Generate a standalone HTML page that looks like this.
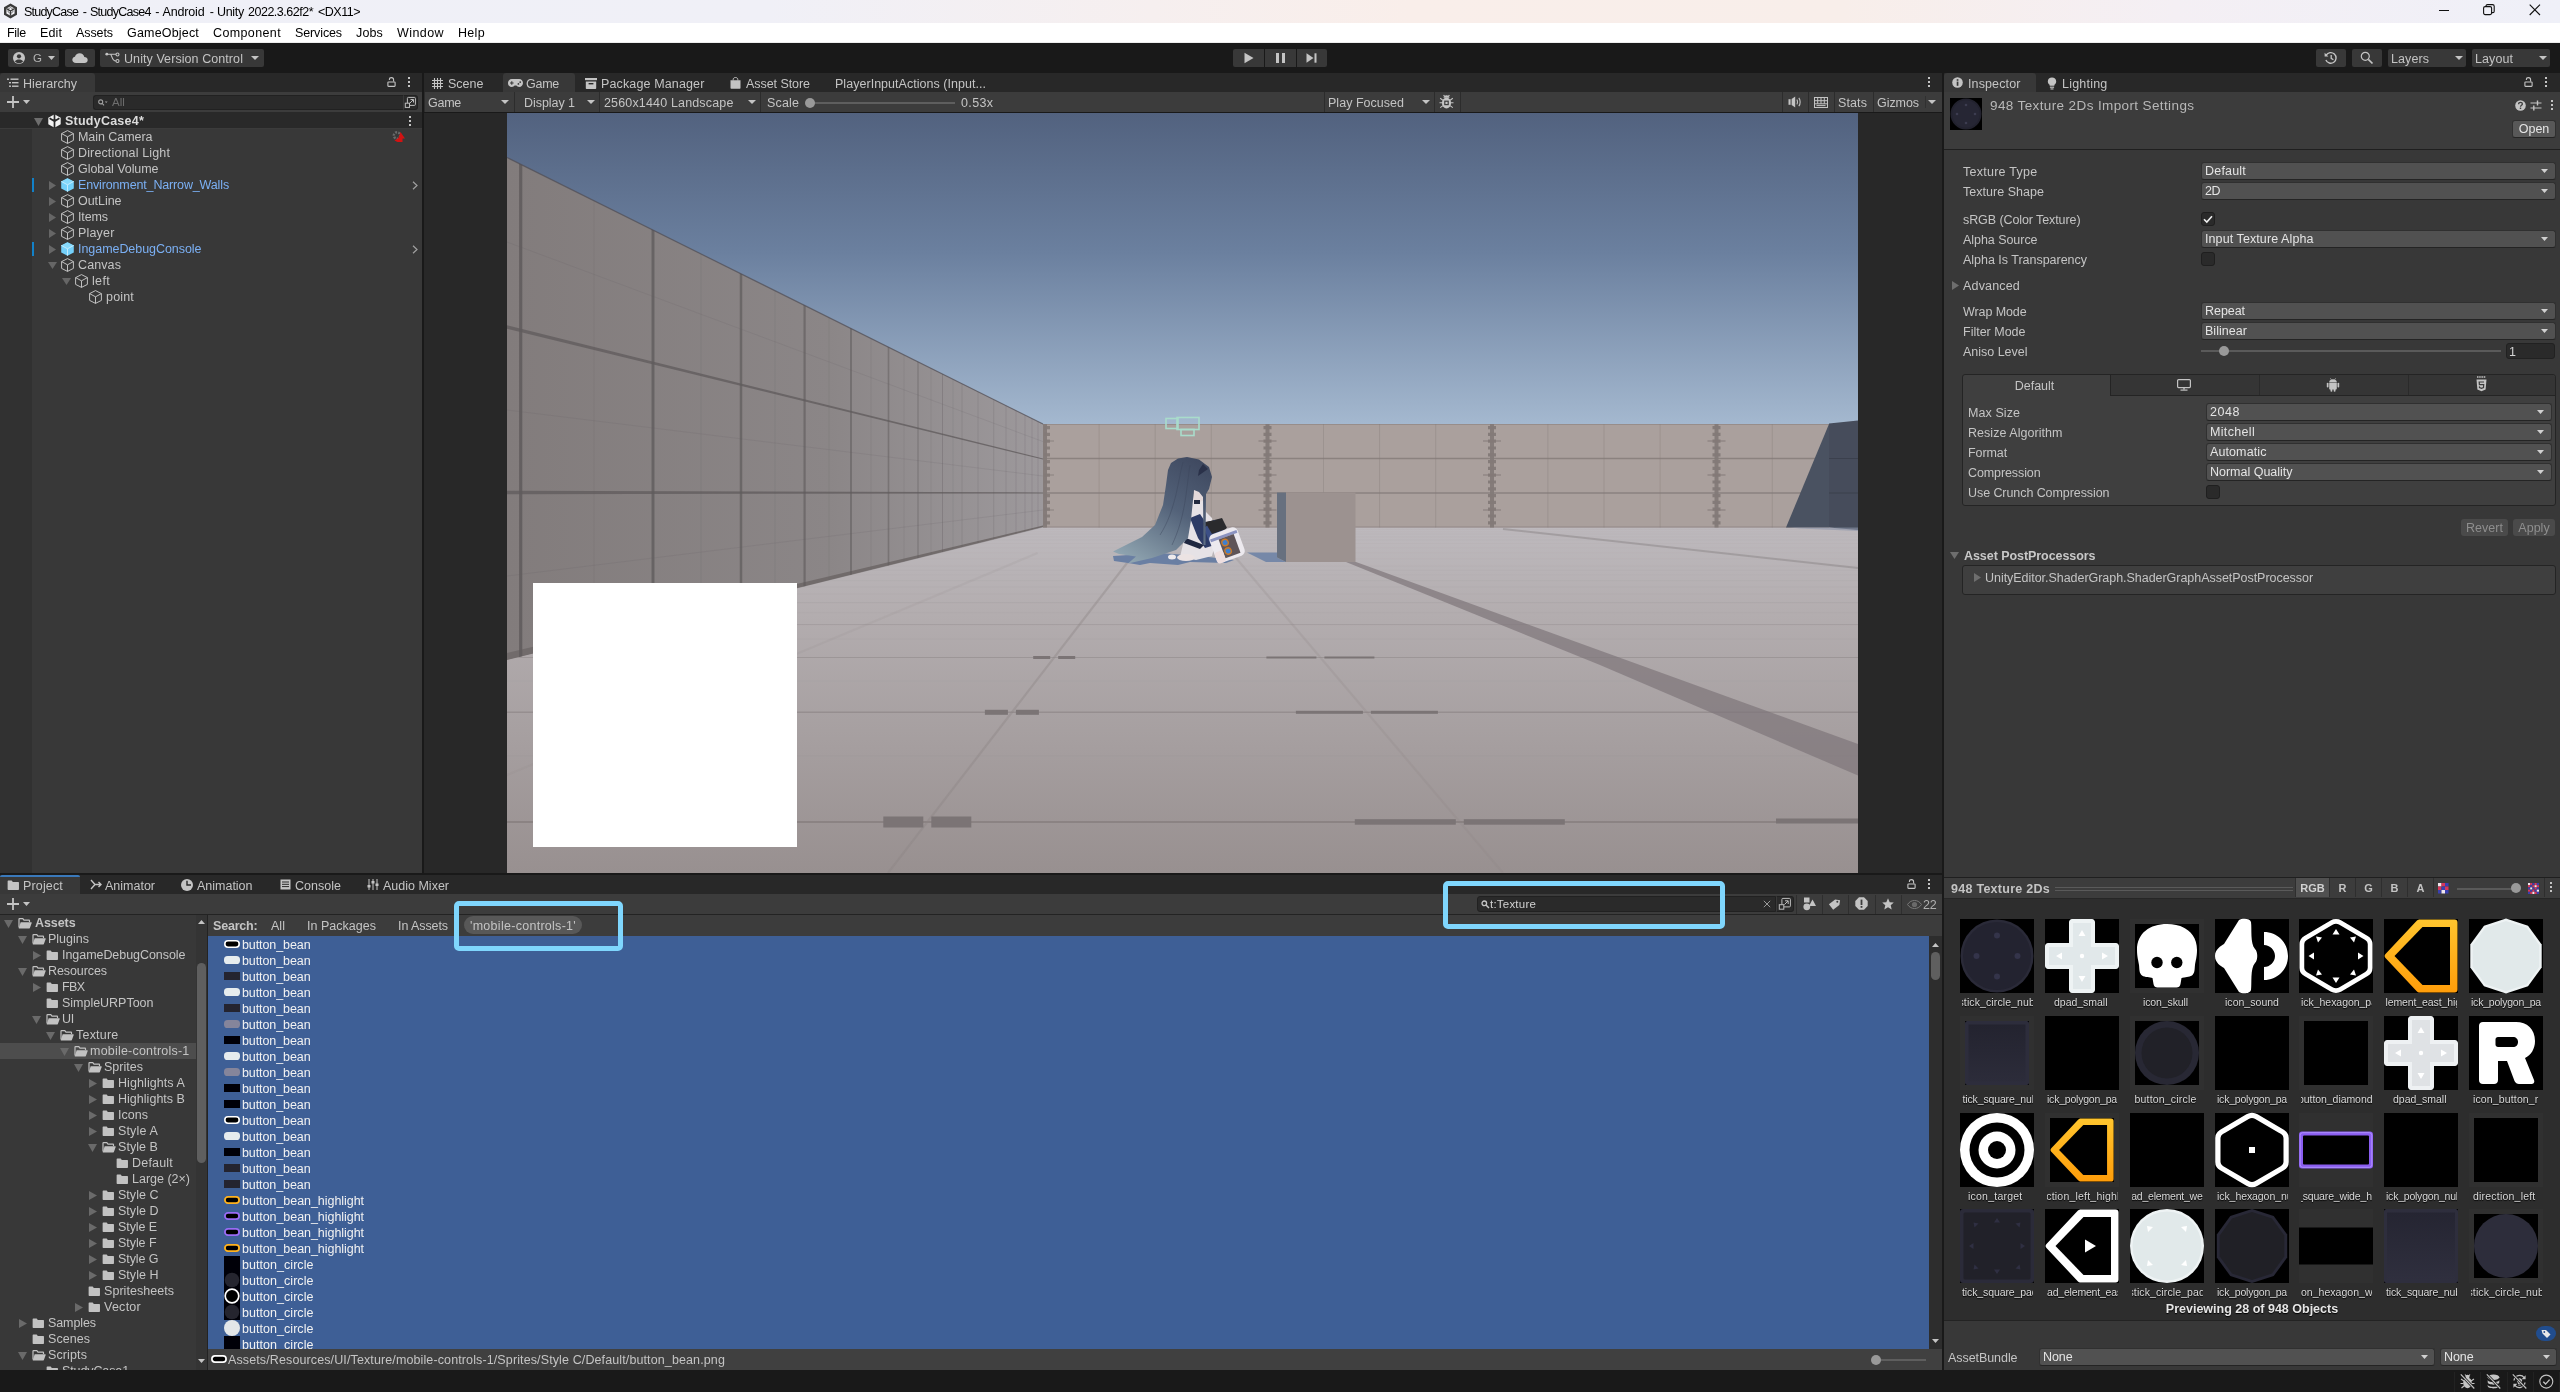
<!DOCTYPE html>
<html><head><meta charset="utf-8"><title>Unity</title><style>*{box-sizing:border-box;margin:0;padding:0}
html,body{width:2560px;height:1392px;overflow:hidden;background:#191919}
body{font-family:"Liberation Sans",sans-serif;font-size:12.5px;color:#c4c4c4;position:relative}
#root{position:absolute;left:0;top:0;width:2560px;height:1392px;will-change:transform}
.a{position:absolute}
.t{position:absolute;white-space:nowrap}
svg{display:block;overflow:visible}
.lab{overflow:hidden;font-size:10.5px;line-height:16px;color:#d8d8d8;white-space:nowrap;text-shadow:0 1px 1px #000}
.lab span{position:absolute;top:0}
</style></head><body>
<div id="root">
<div class="a" style="left:0px;top:0px;width:2560px;height:23px;background:linear-gradient(90deg,#eff0f7 0%,#f0f0f7 30%,#f6efef 45%,#f9eeea 55%,#f8eeea 72%,#f4eff4 85%,#eff0f8 100%);"></div>
<svg class="a" style="left:3px;top:3px;" width="15" height="16" viewBox="0 0 15 16"><path d="M7.5 0.6L14 4.2V11.8L7.5 15.4L1 11.8V4.2Z" fill="#3a3a3a"/><path d="M7.5 3.2L11.6 5.5V10.5L7.5 12.8L3.4 10.5V5.5Z" fill="#f2f2f6"/><path d="M7.5 8V12.8M7.5 8L3.4 5.5M7.5 8L11.6 5.5" stroke="#3a3a3a" stroke-width="1.4" fill="none"/><path d="M7.5 4.6L9.9 6V9L7.5 10.4L5.1 9V6Z" fill="none" stroke="#3a3a3a" stroke-width="0.6"/></svg>
<div class="t" style="left:24px;top:1px;height:23px;line-height:23px;color:#000;letter-spacing:-0.773px;">StudyCase</div>
<div class="t" style="left:82.8px;top:1px;height:23px;line-height:23px;color:#000;letter-spacing:0.244px;">-</div>
<div class="t" style="left:90px;top:1px;height:23px;line-height:23px;color:#000;letter-spacing:-0.731px;">StudyCase4</div>
<div class="t" style="left:155.3px;top:1px;height:23px;line-height:23px;color:#000;letter-spacing:0.244px;">-</div>
<div class="t" style="left:162.5px;top:1px;height:23px;line-height:23px;color:#000;letter-spacing:-0.156px;">Android</div>
<div class="t" style="left:209.8px;top:1px;height:23px;line-height:23px;color:#000;letter-spacing:0.244px;">-</div>
<div class="t" style="left:217px;top:1px;height:23px;line-height:23px;color:#000;letter-spacing:-0.337px;">Unity</div>
<div class="t" style="left:248px;top:1px;height:23px;line-height:23px;color:#000;letter-spacing:-0.491px;">2022.3.62f2*</div>
<div class="t" style="left:318px;top:1px;height:23px;line-height:23px;color:#000;letter-spacing:-0.492px;">&lt;DX11&gt;</div>
<div class="a" style="left:2439px;top:10px;width:10px;height:1px;background:#111;"></div>
<svg class="a" style="left:2483px;top:4px;" width="12" height="12" viewBox="0 0 12 12"><rect x="0.6" y="2.6" width="8" height="8" rx="1.5" fill="none" stroke="#111" stroke-width="1.1"/><path d="M3 2.6V2.1C3 1.2 3.7 0.6 4.5 0.6H9.5C10.5 0.6 11.2 1.3 11.2 2.2V7.2C11.2 8 10.6 8.6 9.8 8.6H8.8" fill="none" stroke="#111" stroke-width="1.1"/></svg>
<svg class="a" style="left:2529px;top:4px;" width="12" height="12" viewBox="0 0 12 12"><path d="M0.7 0.7L11 11M11 0.7L0.7 11" stroke="#111" stroke-width="1.1" fill="none"/></svg>
<div class="a" style="left:0px;top:23px;width:2560px;height:20px;background:#fff;border-bottom:1px solid #ececec;"></div>
<div class="t" style="left:7px;top:24px;height:19px;line-height:19px;color:#000;letter-spacing:-0.289px;">File</div>
<div class="t" style="left:40px;top:24px;height:19px;line-height:19px;color:#000;letter-spacing:0.113px;">Edit</div>
<div class="t" style="left:76px;top:24px;height:19px;line-height:19px;color:#000;letter-spacing:-0.086px;">Assets</div>
<div class="t" style="left:127px;top:24px;height:19px;line-height:19px;color:#000;letter-spacing:0.184px;">GameObject</div>
<div class="t" style="left:213px;top:24px;height:19px;line-height:19px;color:#000;letter-spacing:0.375px;">Component</div>
<div class="t" style="left:295px;top:24px;height:19px;line-height:19px;color:#000;letter-spacing:-0.117px;">Services</div>
<div class="t" style="left:356px;top:24px;height:19px;line-height:19px;color:#000;letter-spacing:0.148px;">Jobs</div>
<div class="t" style="left:397px;top:24px;height:19px;line-height:19px;color:#000;letter-spacing:0.422px;">Window</div>
<div class="t" style="left:458px;top:24px;height:19px;line-height:19px;color:#000;letter-spacing:0.320px;">Help</div>
<div class="a" style="left:0px;top:43px;width:2560px;height:30px;background:#191919;"></div>
<div class="a" style="left:8px;top:49px;width:51px;height:18px;background:#383838;border-radius:2px;"></div>
<svg class="a" style="left:13px;top:52px;" width="12" height="12" viewBox="0 0 12 12"><circle cx="6" cy="6" r="6" fill="#c4c4c4"/><circle cx="6" cy="4.3" r="2.1" fill="#383838"/><path d="M1.9 9.4C2.8 7.9 4.2 7.4 6 7.4S9.2 7.9 10.1 9.4C9 10.6 7.6 11.2 6 11.2S3 10.6 1.9 9.4Z" fill="#383838"/></svg>
<div class="t" style="left:33px;top:49px;height:18px;line-height:18px;font-size:11.5px;color:#b4b4b4;letter-spacing:-0.938px;">G</div>
<svg class="a" style="left:48px;top:56px;" width="7" height="4" viewBox="0 0 7 4"><path d="M0 0H7L3.5 4Z" fill="#c4c4c4"/></svg>
<div class="a" style="left:65px;top:49px;width:30px;height:18px;background:#383838;border-radius:2px;"></div>
<svg class="a" style="left:72px;top:53px;" width="16" height="10" viewBox="0 0 16 10"><path d="M4 10C1.8 10 0.3 8.6 0.3 6.8C0.3 5.2 1.5 4 3 3.8C3.5 1.7 5.3 0.3 7.6 0.3C10 0.3 11.9 1.9 12.3 4C14.2 4 15.7 5.3 15.7 7C15.7 8.7 14.3 10 12.5 10Z" fill="#c4c4c4"/></svg>
<div class="a" style="left:100px;top:49px;width:164px;height:18px;background:#383838;border-radius:2px;"></div>
<svg class="a" style="left:105px;top:52px;" width="15" height="12" viewBox="0 0 15 12"><circle cx="1.8" cy="2.2" r="1.4" fill="#c4c4c4"/><circle cx="12.5" cy="2.5" r="1.5" fill="none" stroke="#c4c4c4" stroke-width="1.1"/><circle cx="12.5" cy="9" r="1.5" fill="none" stroke="#c4c4c4" stroke-width="1.1"/><path d="M3 2.2H11M5.5 2.4C7 2.6 6.5 9 11 9" fill="none" stroke="#c4c4c4" stroke-width="1.1"/></svg>
<div class="t" style="left:124px;top:50px;height:18px;line-height:18px;color:#c4c4c4;letter-spacing:0.075px;">Unity Version Control</div>
<svg class="a" style="left:251px;top:56px;" width="8" height="4" viewBox="0 0 8 4"><path d="M0 0H8L4.0 4Z" fill="#c4c4c4"/></svg>
<div class="a" style="left:1233px;top:49px;width:31px;height:18px;background:#383838;border-radius:2px 0 0 2px;"></div>
<svg class="a" style="left:1244px;top:52px;" width="10" height="12" viewBox="0 0 10 12"><path d="M0.5 0.8L9.5 6L0.5 11.2Z" fill="#c4c4c4"/></svg>
<div class="a" style="left:1265px;top:49px;width:31px;height:18px;background:#383838;"></div>
<div class="a" style="left:1276px;top:53px;width:3px;height:10px;background:#c4c4c4;"></div>
<div class="a" style="left:1282px;top:53px;width:3px;height:10px;background:#c4c4c4;"></div>
<div class="a" style="left:1297px;top:49px;width:30px;height:18px;background:#383838;border-radius:0 2px 2px 0;"></div>
<svg class="a" style="left:1306px;top:53px;" width="12" height="10" viewBox="0 0 12 10"><path d="M0.5 0.3L7.5 5L0.5 9.7Z" fill="#c4c4c4"/><rect x="8.5" y="0.3" width="2" height="9.4" fill="#c4c4c4"/></svg>
<div class="a" style="left:2316px;top:49px;width:30px;height:18px;background:#383838;border-radius:2px;"></div>
<svg class="a" style="left:2324px;top:51px;" width="14" height="14" viewBox="0 0 14 14"><path d="M2.2 4.2A5.3 5.3 0 1 1 1.9 9" fill="none" stroke="#c4c4c4" stroke-width="1.4"/><path d="M0.6 1.8V5.6H4.4Z" fill="#c4c4c4"/><path d="M7.2 4V7.4L9.4 8.8" fill="none" stroke="#c4c4c4" stroke-width="1.3"/></svg>
<div class="a" style="left:2352px;top:49px;width:30px;height:18px;background:#383838;border-radius:2px;"></div>
<svg class="a" style="left:2360px;top:51px;" width="14" height="14" viewBox="0 0 14 14"><circle cx="5.3" cy="5.3" r="4" fill="none" stroke="#c4c4c4" stroke-width="1.2"/><path d="M8.3 8.3L12.5 12.5" stroke="#c4c4c4" stroke-width="1.7"/></svg>
<div class="a" style="left:2388px;top:49px;width:78px;height:18px;background:#383838;border-radius:2px;"></div>
<div class="t" style="left:2391px;top:50px;height:18px;line-height:18px;color:#c4c4c4;letter-spacing:0.081px;">Layers</div>
<svg class="a" style="left:2455px;top:56px;" width="8" height="4" viewBox="0 0 8 4"><path d="M0 0H8L4.0 4Z" fill="#c4c4c4"/></svg>
<div class="a" style="left:2472px;top:49px;width:78px;height:18px;background:#383838;border-radius:2px;"></div>
<div class="t" style="left:2475px;top:50px;height:18px;line-height:18px;color:#c4c4c4;letter-spacing:0.078px;">Layout</div>
<svg class="a" style="left:2539px;top:56px;" width="8" height="4" viewBox="0 0 8 4"><path d="M0 0H8L4.0 4Z" fill="#c4c4c4"/></svg>
<div class="a" style="left:0px;top:73px;width:422px;height:19px;background:#282828;"></div>
<div class="a" style="left:0px;top:73px;width:95px;height:19px;background:#383838;border-radius:3px 3px 0 0;"></div>
<svg class="a" style="left:7px;top:78px;" width="12" height="10" viewBox="0 0 12 10"><rect x="0" y="0.5" width="2" height="1.4" fill="#c4c4c4"/><rect x="3.5" y="0.5" width="8" height="1.4" fill="#c4c4c4"/><rect x="2" y="4" width="2" height="1.4" fill="#c4c4c4"/><rect x="5" y="4" width="6.5" height="1.4" fill="#c4c4c4"/><rect x="2" y="7.5" width="2" height="1.4" fill="#c4c4c4"/><rect x="5" y="7.5" width="6.5" height="1.4" fill="#c4c4c4"/></svg>
<div class="t" style="left:23px;top:74px;height:20px;line-height:20px;color:#c4c4c4;letter-spacing:0.057px;">Hierarchy</div>
<svg class="a" style="left:387px;top:77px;" width="9" height="10" viewBox="0 0 9 10"><path d="M6.600 4.600V2.800C6.600 1.500 5.700 0.600 4.500 0.600S2.400 1.400 2.400 2.500V3" fill="none" stroke="#c4c4c4" stroke-width="1.100"/><rect x="0.900" y="5" width="7.200" height="4.400" rx="0.600" fill="none" stroke="#c4c4c4" stroke-width="1.100"/></svg>
<svg class="a" style="left:408px;top:77px;" width="2" height="10" viewBox="0 0 2 10"><rect x="0" y="0" width="2" height="2" fill="#c4c4c4"/><rect x="0" y="4" width="2" height="2" fill="#c4c4c4"/><rect x="0" y="8" width="2" height="2" fill="#c4c4c4"/></svg>
<div class="a" style="left:0px;top:92px;width:422px;height:20px;background:#3c3c3c;"></div>
<svg class="a" style="left:7px;top:96px;" width="12" height="12" viewBox="0 0 12 12"><path d="M6 0V12M0 6H12" stroke="#c4c4c4" stroke-width="1.8"/></svg>
<svg class="a" style="left:23px;top:100px;" width="7" height="4" viewBox="0 0 7 4"><path d="M0 0H7L3.5 4Z" fill="#c4c4c4"/></svg>
<div class="a" style="left:93px;top:95px;width:310px;height:15px;background:#2a2a2a;border:1px solid #212121;border-radius:3px;border-right:none;border-radius:3px 0 0 3px;"></div>
<div class="a" style="left:403px;top:95px;width:15px;height:15px;background:#2a2a2a;border:1px solid #212121;border-radius:0 3px 3px 0;border-left:1px solid #3a3a3a;"></div>
<svg class="a" style="left:98px;top:99px;" width="10" height="7" viewBox="0 0 10 7"><circle cx="2.7" cy="2.9" r="2" fill="none" stroke="#a0a0a0" stroke-width="1.1"/><path d="M4.2 4.4L6 6.4" stroke="#a0a0a0" stroke-width="1.1"/><path d="M6.8 2.4H9.6L8.2 4Z" fill="#a0a0a0"/></svg>
<div class="t" style="left:112px;top:95px;height:15px;line-height:15px;font-size:11.5px;color:#6e6e6e;letter-spacing:0.068px;">All</div>
<svg class="a" style="left:404px;top:96px;" width="13" height="13" viewBox="0 0 13 13"><rect x="3.4" y="1.4" width="8" height="8" rx="1" fill="none" stroke="#bdbdbd" stroke-width="1"/><rect x="1.3" y="7.2" width="4.2" height="4.2" fill="#2a2a2a" stroke="#bdbdbd" stroke-width="1"/><path d="M6 7L9.3 3.7M6.5 3.5H9.5V6.5" fill="none" stroke="#bdbdbd" stroke-width="1"/></svg>
<div class="a" style="left:0px;top:112px;width:422px;height:761px;background:#383838;"></div>
<div class="a" style="left:0px;top:128px;width:32px;height:745px;background:#313131;"></div>
<div class="a" style="left:0px;top:112px;width:422px;height:16px;background:#292929;"></div>
<div class="a" style="left:0px;top:128px;width:422px;height:1px;background:#3b3b3b;"></div>
<svg class="a" style="left:34px;top:118px;" width="9" height="8" viewBox="0 0 9 8"><path d="M0 0H9L4.5 8Z" fill="#6e6e6e"/></svg>
<svg class="a" style="left:48px;top:114px;" width="13" height="14" viewBox="0 0 13 14"><path d="M6.500 0.300L12.700 3.700V10.300L6.500 13.700L0.300 10.300V3.700Z" fill="#f2f2f2"/><path d="M6.500 0V14M6.500 7.200L1.600 4.300M6.500 7.200L11.400 4.300" stroke="#292929" stroke-width="1.700" fill="none"/><path d="M4.600 5.400L6.500 8.400L8.400 5.400Z" fill="#292929"/><path d="M2.600 6.200V9.400L5 10.800M10.400 6.200V9.400L8 10.800M4.300 2.400L6.500 1.200" stroke="#292929" stroke-width="0" fill="none"/></svg>
<div class="t" style="left:65px;top:113px;height:17px;line-height:17px;color:#dcdcdc;font-weight:bold;letter-spacing:0.233px;">StudyCase4*</div>
<svg class="a" style="left:409px;top:116px;" width="2" height="10" viewBox="0 0 2 10"><rect x="0" y="0" width="2" height="2" fill="#c4c4c4"/><rect x="0" y="4" width="2" height="2" fill="#c4c4c4"/><rect x="0" y="8" width="2" height="2" fill="#c4c4c4"/></svg>
<svg class="a" style="left:61px;top:130px;" width="13" height="14" viewBox="0 0 13 14"><path d="M6.500 0.600L12.400 3.600V10.400L6.500 13.400L0.600 10.400V3.600Z M0.600 3.600L6.500 6.800L12.400 3.600 M6.500 6.800V13.400" fill="none" stroke="#c8c8c8" stroke-width="0.950" stroke-linejoin="round"/></svg>
<div class="t" style="left:78px;top:129px;height:17px;line-height:17px;color:#c4c4c4;letter-spacing:-0.047px;">Main Camera</div>
<svg class="a" style="left:61px;top:146px;" width="13" height="14" viewBox="0 0 13 14"><path d="M6.500 0.600L12.400 3.600V10.400L6.500 13.400L0.600 10.400V3.600Z M0.600 3.600L6.500 6.800L12.400 3.600 M6.500 6.800V13.400" fill="none" stroke="#c8c8c8" stroke-width="0.950" stroke-linejoin="round"/></svg>
<div class="t" style="left:78px;top:145px;height:17px;line-height:17px;color:#c4c4c4;letter-spacing:0.139px;">Directional Light</div>
<svg class="a" style="left:61px;top:162px;" width="13" height="14" viewBox="0 0 13 14"><path d="M6.500 0.600L12.400 3.600V10.400L6.500 13.400L0.600 10.400V3.600Z M0.600 3.600L6.500 6.800L12.400 3.600 M6.500 6.800V13.400" fill="none" stroke="#c8c8c8" stroke-width="0.950" stroke-linejoin="round"/></svg>
<div class="t" style="left:78px;top:161px;height:17px;line-height:17px;color:#c4c4c4;letter-spacing:-0.062px;">Global Volume</div>
<svg class="a" style="left:49px;top:181px;" width="7" height="9" viewBox="0 0 7 9"><path d="M0 0L7 4.5L0 9Z" fill="#666"/></svg>
<svg class="a" style="left:61px;top:178px;" width="13" height="14" viewBox="0 0 13 14"><path d="M6.500 0.200L12.800 3.400V10.600L6.500 13.800L0.200 10.600V3.400Z" fill="#74d0fa"/><path d="M6.500 0.200L12.800 3.400L6.500 6.800L0.200 3.400Z" fill="#86d9fc"/><path d="M0.200 3.400L6.500 6.800L12.800 3.400M6.500 6.800V13.800" fill="none" stroke="#d4f1ff" stroke-width="0.800"/></svg>
<div class="a" style="left:32px;top:178px;width:2px;height:14px;background:#1281c8;"></div>
<svg class="a" style="left:412px;top:181px;" width="6" height="9" viewBox="0 0 6 9"><path d="M1 0.8L5 4.5L1 8.2" fill="none" stroke="#a0a0a0" stroke-width="1.2"/></svg>
<div class="t" style="left:78px;top:177px;height:17px;line-height:17px;color:#7bb0f4;letter-spacing:-0.144px;">Environment_Narrow_Walls</div>
<svg class="a" style="left:49px;top:197px;" width="7" height="9" viewBox="0 0 7 9"><path d="M0 0L7 4.5L0 9Z" fill="#666"/></svg>
<svg class="a" style="left:61px;top:194px;" width="13" height="14" viewBox="0 0 13 14"><path d="M6.500 0.600L12.400 3.600V10.400L6.500 13.400L0.600 10.400V3.600Z M0.600 3.600L6.500 6.800L12.400 3.600 M6.500 6.800V13.400" fill="none" stroke="#c8c8c8" stroke-width="0.950" stroke-linejoin="round"/></svg>
<div class="t" style="left:78px;top:193px;height:17px;line-height:17px;color:#c4c4c4;letter-spacing:-0.040px;">OutLine</div>
<svg class="a" style="left:49px;top:213px;" width="7" height="9" viewBox="0 0 7 9"><path d="M0 0L7 4.5L0 9Z" fill="#666"/></svg>
<svg class="a" style="left:61px;top:210px;" width="13" height="14" viewBox="0 0 13 14"><path d="M6.500 0.600L12.400 3.600V10.400L6.500 13.400L0.600 10.400V3.600Z M0.600 3.600L6.500 6.800L12.400 3.600 M6.500 6.800V13.400" fill="none" stroke="#c8c8c8" stroke-width="0.950" stroke-linejoin="round"/></svg>
<div class="t" style="left:78px;top:209px;height:17px;line-height:17px;color:#c4c4c4;letter-spacing:-0.109px;">Items</div>
<svg class="a" style="left:49px;top:229px;" width="7" height="9" viewBox="0 0 7 9"><path d="M0 0L7 4.5L0 9Z" fill="#666"/></svg>
<svg class="a" style="left:61px;top:226px;" width="13" height="14" viewBox="0 0 13 14"><path d="M6.500 0.600L12.400 3.600V10.400L6.500 13.400L0.600 10.400V3.600Z M0.600 3.600L6.500 6.800L12.400 3.600 M6.500 6.800V13.400" fill="none" stroke="#c8c8c8" stroke-width="0.950" stroke-linejoin="round"/></svg>
<div class="t" style="left:78px;top:225px;height:17px;line-height:17px;color:#c4c4c4;letter-spacing:0.177px;">Player</div>
<svg class="a" style="left:49px;top:245px;" width="7" height="9" viewBox="0 0 7 9"><path d="M0 0L7 4.5L0 9Z" fill="#666"/></svg>
<svg class="a" style="left:61px;top:242px;" width="13" height="14" viewBox="0 0 13 14"><path d="M6.500 0.200L12.800 3.400V10.600L6.500 13.800L0.200 10.600V3.400Z" fill="#74d0fa"/><path d="M6.500 0.200L12.800 3.400L6.500 6.800L0.200 3.400Z" fill="#86d9fc"/><path d="M0.200 3.400L6.500 6.800L12.800 3.400M6.500 6.800V13.800" fill="none" stroke="#d4f1ff" stroke-width="0.800"/></svg>
<div class="a" style="left:32px;top:242px;width:2px;height:14px;background:#1281c8;"></div>
<svg class="a" style="left:412px;top:245px;" width="6" height="9" viewBox="0 0 6 9"><path d="M1 0.8L5 4.5L1 8.2" fill="none" stroke="#a0a0a0" stroke-width="1.2"/></svg>
<div class="t" style="left:78px;top:241px;height:17px;line-height:17px;color:#7bb0f4;letter-spacing:-0.050px;">IngameDebugConsole</div>
<svg class="a" style="left:48px;top:262px;" width="9" height="7" viewBox="0 0 9 7"><path d="M0 0H9L4.5 7Z" fill="#666"/></svg>
<svg class="a" style="left:61px;top:258px;" width="13" height="14" viewBox="0 0 13 14"><path d="M6.500 0.600L12.400 3.600V10.400L6.500 13.400L0.600 10.400V3.600Z M0.600 3.600L6.500 6.800L12.400 3.600 M6.500 6.800V13.400" fill="none" stroke="#c8c8c8" stroke-width="0.950" stroke-linejoin="round"/></svg>
<div class="t" style="left:78px;top:257px;height:17px;line-height:17px;color:#c4c4c4;letter-spacing:0.102px;">Canvas</div>
<svg class="a" style="left:62px;top:278px;" width="9" height="7" viewBox="0 0 9 7"><path d="M0 0H9L4.5 7Z" fill="#666"/></svg>
<svg class="a" style="left:75px;top:274px;" width="13" height="14" viewBox="0 0 13 14"><path d="M6.500 0.600L12.400 3.600V10.400L6.500 13.400L0.600 10.400V3.600Z M0.600 3.600L6.500 6.800L12.400 3.600 M6.500 6.800V13.400" fill="none" stroke="#c8c8c8" stroke-width="0.950" stroke-linejoin="round"/></svg>
<div class="t" style="left:92px;top:273px;height:17px;line-height:17px;color:#c4c4c4;letter-spacing:0.332px;">left</div>
<svg class="a" style="left:89px;top:290px;" width="13" height="14" viewBox="0 0 13 14"><path d="M6.500 0.600L12.400 3.600V10.400L6.500 13.400L0.600 10.400V3.600Z M0.600 3.600L6.500 6.800L12.400 3.600 M6.500 6.800V13.400" fill="none" stroke="#c8c8c8" stroke-width="0.950" stroke-linejoin="round"/></svg>
<div class="t" style="left:106px;top:289px;height:17px;line-height:17px;color:#c4c4c4;letter-spacing:0.178px;">point</div>
<svg class="a" style="left:391px;top:129px;" width="15" height="15" viewBox="0 0 15 15"><circle cx="6" cy="6.5" r="3.2" fill="none" stroke="#6a6a6a" stroke-width="2.4" stroke-dasharray="2 1.2"/><path d="M9.5 3L14 9.5L11.5 9.5L11.5 13H6.5L3.5 11.5L7.5 9Z" fill="#d21212"/></svg>
<div class="a" style="left:424px;top:73px;width:1518px;height:19px;background:#282828;"></div>
<div class="a" style="left:503px;top:73px;width:72px;height:19px;background:#383838;border-radius:3px 3px 0 0;"></div>
<svg class="a" style="left:432px;top:78px;" width="11" height="11" viewBox="0 0 11 11"><path d="M2.500 0V11M5.500 0V11M8.500 0V11M0 2.500H11M0 5.500H11M0 8.500H11" stroke="#c4c4c4" stroke-width="1.100"/></svg>
<div class="t" style="left:448px;top:74px;height:20px;line-height:20px;color:#c4c4c4;letter-spacing:0.009px;">Scene</div>
<svg class="a" style="left:508px;top:79px;" width="15" height="8" viewBox="0 0 15 8"><path d="M3.8 0H11.2C13.4 0 15 1.7 15 4S13.4 8 11.2 8C10 8 9 7.4 8.4 6.6H6.6C6 7.4 5 8 3.8 8C1.6 8 0 6.3 0 4S1.6 0 3.8 0Z" fill="#c4c4c4"/><path d="M3.8 2.2V5.8M2 4H5.6" stroke="#383838" stroke-width="1.1"/><circle cx="10.4" cy="4.9" r="0.9" fill="#383838"/><circle cx="12.2" cy="3.1" r="0.9" fill="#383838"/></svg>
<div class="t" style="left:526px;top:74px;height:20px;line-height:20px;color:#c4c4c4;letter-spacing:-0.258px;">Game</div>
<svg class="a" style="left:585px;top:78px;" width="12" height="11" viewBox="0 0 12 11"><rect x="0" y="0" width="12" height="2.2" fill="#c4c4c4"/><path d="M0.8 3.4H11.2V10.2C11.2 10.6 10.9 10.9 10.5 10.9H1.5C1.1 10.9 0.8 10.6 0.8 10.2Z" fill="#c4c4c4"/><rect x="3.6" y="5" width="4.8" height="1.4" fill="#282828"/></svg>
<div class="t" style="left:601px;top:74px;height:20px;line-height:20px;color:#c4c4c4;letter-spacing:0.136px;">Package Manager</div>
<svg class="a" style="left:730px;top:77px;" width="11" height="12" viewBox="0 0 11 12"><path d="M3.2 3.5V2.4C3.2 1.2 4.2 0.5 5.5 0.5S7.8 1.2 7.8 2.4V3.5" fill="none" stroke="#c4c4c4" stroke-width="1"/><path d="M0.5 3.2H10.5V11C10.500 11.4 10.2 11.7 9.8 11.7H1.2C0.8 11.7 0.5 11.4 0.5 11Z" fill="#c4c4c4"/></svg>
<div class="t" style="left:746px;top:74px;height:20px;line-height:20px;color:#c4c4c4;letter-spacing:-0.055px;">Asset Store</div>
<div class="t" style="left:835px;top:74px;height:20px;line-height:20px;color:#c4c4c4;letter-spacing:0.033px;">PlayerInputActions (Input...</div>
<svg class="a" style="left:1928px;top:77px;" width="2" height="10" viewBox="0 0 2 10"><rect x="0" y="0" width="2" height="2" fill="#c4c4c4"/><rect x="0" y="4" width="2" height="2" fill="#c4c4c4"/><rect x="0" y="8" width="2" height="2" fill="#c4c4c4"/></svg>
<div class="a" style="left:424px;top:92px;width:1518px;height:20px;background:#3c3c3c;"></div>
<div class="t" style="left:428px;top:93px;height:20px;line-height:20px;color:#c4c4c4;letter-spacing:-0.258px;">Game</div>
<svg class="a" style="left:501px;top:100px;" width="8" height="4" viewBox="0 0 8 4"><path d="M0 0H8L4.0 4Z" fill="#c4c4c4"/></svg>
<div class="a" style="left:1925px;top:96px;width:1px;height:12px;background:#303030;"></div>
<div class="a" style="left:424px;top:92px;width:1px;height:20px;background:#2c2c2c;"></div>
<div class="a" style="left:514px;top:92px;width:1px;height:20px;background:#2c2c2c;"></div>
<div class="a" style="left:599px;top:92px;width:1px;height:20px;background:#2c2c2c;"></div>
<div class="a" style="left:760px;top:92px;width:1px;height:20px;background:#2c2c2c;"></div>
<div class="a" style="left:1324px;top:92px;width:1px;height:20px;background:#2c2c2c;"></div>
<div class="a" style="left:1434px;top:92px;width:1px;height:20px;background:#2c2c2c;"></div>
<div class="a" style="left:1460px;top:92px;width:1px;height:20px;background:#2c2c2c;"></div>
<div class="a" style="left:1782px;top:92px;width:1px;height:20px;background:#2c2c2c;"></div>
<div class="a" style="left:1808px;top:92px;width:1px;height:20px;background:#2c2c2c;"></div>
<div class="a" style="left:1834px;top:92px;width:1px;height:20px;background:#2c2c2c;"></div>
<div class="a" style="left:1873px;top:92px;width:1px;height:20px;background:#2c2c2c;"></div>
<div class="t" style="left:524px;top:93px;height:20px;line-height:20px;color:#c4c4c4;letter-spacing:-0.047px;">Display 1</div>
<svg class="a" style="left:587px;top:100px;" width="8" height="4" viewBox="0 0 8 4"><path d="M0 0H8L4.0 4Z" fill="#c4c4c4"/></svg>
<div class="t" style="left:604px;top:93px;height:20px;line-height:20px;color:#c4c4c4;letter-spacing:0.157px;">2560x1440 Landscape</div>
<svg class="a" style="left:748px;top:100px;" width="8" height="4" viewBox="0 0 8 4"><path d="M0 0H8L4.0 4Z" fill="#c4c4c4"/></svg>
<div class="t" style="left:767px;top:93px;height:20px;line-height:20px;color:#c4c4c4;letter-spacing:0.144px;">Scale</div>
<div class="a" style="left:812px;top:102px;width:143px;height:1px;background:#5e5e5e;height:1.5px;"></div>
<div class="a" style="left:805px;top:98px;width:10px;height:10px;background:#999;border-radius:5px;"></div>
<div class="t" style="left:961px;top:93px;height:20px;line-height:20px;color:#c4c4c4;letter-spacing:0.384px;">0.53x</div>
<div class="t" style="left:1328px;top:93px;height:20px;line-height:20px;color:#c4c4c4;letter-spacing:0.021px;">Play Focused</div>
<svg class="a" style="left:1422px;top:100px;" width="8" height="4" viewBox="0 0 8 4"><path d="M0 0H8L4.0 4Z" fill="#c4c4c4"/></svg>
<svg class="a" style="left:1439px;top:94px;" width="15" height="16" viewBox="0 0 15 16"><ellipse cx="7.5" cy="9" rx="4.600" ry="5.400" fill="#c4c4c4"/><path d="M4.5 3.8C4.5 2 6 1.2 7.5 1.2S10.5 2 10.5 3.8Z" fill="#c4c4c4"/><path d="M4.6 1L5.6 2.4M10.4 1L9.4 2.4M0.5 8.8H3.5M11.5 8.8H14.5M1.2 4.2L4 6.4M13.8 4.2L11 6.4M1.2 13.6L4 11.6M13.8 13.6L11 11.6" stroke="#c4c4c4" stroke-width="1.1" fill="none"/><rect x="5.2" y="6.6" width="4.600" height="4.6" fill="#3c3c3c"/><rect x="6.4" y="7.8" width="2.2" height="2.2" fill="#c4c4c4"/></svg>
<svg class="a" style="left:1788px;top:96px;" width="14" height="12" viewBox="0 0 14 12"><path d="M0.5 3.2H2.6V8.8H0.5Z" fill="#c4c4c4"/><path d="M3.6 3L7.2 0.4V11.6L3.6 9Z" fill="#c4c4c4"/><path d="M8.8 3.6C9.7 4.6 9.7 7.4 8.8 8.400M10.8 1.8C12.600 3.800 12.600 8.200 10.800 10.200" fill="none" stroke="#c4c4c4" stroke-width="1.1"/></svg>
<svg class="a" style="left:1814px;top:97px;" width="14" height="11" viewBox="0 0 14 11"><rect x="0.5" y="0.5" width="13" height="10" fill="none" stroke="#c4c4c4" stroke-width="1"/><path d="M0.5 3.7H13.5M0.5 6.800H13.500M3.7 0.5V6.800M7 0.500V6.800M10.300 0.500V6.800" stroke="#c4c4c4" stroke-width="1" fill="none"/><path d="M2.5 8.6H11.5" stroke="#c4c4c4" stroke-width="1"/></svg>
<div class="t" style="left:1838px;top:93px;height:20px;line-height:20px;color:#c4c4c4;letter-spacing:0.103px;">Stats</div>
<div class="t" style="left:1877px;top:93px;height:20px;line-height:20px;color:#c4c4c4;letter-spacing:-0.060px;">Gizmos</div>
<svg class="a" style="left:1928px;top:100px;" width="8" height="4" viewBox="0 0 8 4"><path d="M0 0H8L4.0 4Z" fill="#c4c4c4"/></svg>
<div class="a" style="left:424px;top:113px;width:1518px;height:760px;background:#282828;"></div>
<svg class="a" style="left:507px;top:113px" width="1351" height="760" viewBox="507 113 1351 760"><defs>
<linearGradient id="sky" x1="0" y1="113" x2="0" y2="424" gradientUnits="userSpaceOnUse"><stop offset="0" stop-color="#52627f"/><stop offset="0.45" stop-color="#6b809f"/><stop offset="1" stop-color="#a4b8cf"/></linearGradient>
<linearGradient id="lw" x1="507" y1="0" x2="1043" y2="0" gradientUnits="userSpaceOnUse"><stop offset="0" stop-color="#827c7c"/><stop offset="0.6" stop-color="#8b8687"/><stop offset="1" stop-color="#9d999c"/></linearGradient>
<linearGradient id="fl" x1="0" y1="527" x2="0" y2="873" gradientUnits="userSpaceOnUse"><stop offset="0" stop-color="#bdb9bd"/><stop offset="0.25" stop-color="#b3adaf"/><stop offset="1" stop-color="#989090"/></linearGradient>
<linearGradient id="hair" x1="1195" y1="457" x2="1130" y2="560" gradientUnits="userSpaceOnUse"><stop offset="0" stop-color="#3f4960"/><stop offset="0.45" stop-color="#536279"/><stop offset="1" stop-color="#8fa4b0"/></linearGradient>
<clipPath id="lwc"><path d="M507 157.5L1043 424V527L507 660Z"/></clipPath>
<clipPath id="flc"><path d="M507 660L1043 527.5H1858V873H507Z"/></clipPath>
</defs><rect x="507" y="113" width="1351" height="760" fill="url(#sky)"/><path d="M507 657L1043 527H1858V873H507Z" fill="url(#fl)"/><g clip-path="url(#flc)" fill="none"><path d="M507 822.0H1858" stroke="#6f6768" stroke-opacity="0.39" stroke-width="1.8"/><path d="M507 712.3H1858" stroke="#6f6768" stroke-opacity="0.33" stroke-width="1.5"/><path d="M507 657.5H1858" stroke="#6f6768" stroke-opacity="0.28" stroke-width="1.2"/><path d="M507 624.6H1858" stroke="#6f6768" stroke-opacity="0.22" stroke-width="0.9"/><path d="M507 602.7H1858" stroke="#6f6768" stroke-opacity="0.17" stroke-width="0.6"/><path d="M507 587.0H1858" stroke="#6f6768" stroke-opacity="0.11" stroke-width="0.5"/><path d="M507 575.2H1858" stroke="#6f6768" stroke-opacity="0.06" stroke-width="0.5"/><path d="M507 566.1H1858" stroke="#6f6768" stroke-opacity="0.05" stroke-width="0.5"/><path d="M507 558.8H1858" stroke="#6f6768" stroke-opacity="0.05" stroke-width="0.5"/><path d="M507 552.8H1858" stroke="#6f6768" stroke-opacity="0.05" stroke-width="0.5"/><path d="M507 547.8H1858" stroke="#6f6768" stroke-opacity="0.05" stroke-width="0.5"/><path d="M507 543.6H1858" stroke="#6f6768" stroke-opacity="0.05" stroke-width="0.5"/><path d="M507 540.0H1858" stroke="#6f6768" stroke-opacity="0.05" stroke-width="0.5"/><path d="M507 536.9H1858" stroke="#6f6768" stroke-opacity="0.05" stroke-width="0.5"/><path d="M507 534.1H1858" stroke="#6f6768" stroke-opacity="0.05" stroke-width="0.5"/><path d="M507 531.7H1858" stroke="#6f6768" stroke-opacity="0.05" stroke-width="0.5"/><path d="M507 529.6H1858" stroke="#6f6768" stroke-opacity="0.05" stroke-width="0.5"/><path d="M507 527.6H1858" stroke="#6f6768" stroke-opacity="0.05" stroke-width="0.5"/><path d="M507 525.9H1858" stroke="#6f6768" stroke-opacity="0.05" stroke-width="0.5"/><path d="M507 524.3H1858" stroke="#6f6768" stroke-opacity="0.05" stroke-width="0.5"/><path d="M507 756.2H1858" stroke="#7a7273" stroke-opacity="0.08" stroke-width="0.7"/><path d="M507 681.0H1858" stroke="#7a7273" stroke-opacity="0.08" stroke-width="0.7"/><path d="M507 639.2H1858" stroke="#7a7273" stroke-opacity="0.08" stroke-width="0.7"/><path d="M507 612.6H1858" stroke="#7a7273" stroke-opacity="0.08" stroke-width="0.7"/><path d="M507 594.2H1858" stroke="#7a7273" stroke-opacity="0.08" stroke-width="0.7"/><path d="M507 580.7H1858" stroke="#7a7273" stroke-opacity="0.08" stroke-width="0.7"/><path d="M507 570.4H1858" stroke="#7a7273" stroke-opacity="0.08" stroke-width="0.7"/><path d="M1134.7 553L888 873" stroke="#8b8485" stroke-opacity="0.4" stroke-width="2.2"/><path d="M1231.8 553L1503 873" stroke="#8b8485" stroke-opacity="0.22" stroke-width="2.2"/><path d="M1037.6 553L273 873" stroke="#8b8485" stroke-opacity="0.12" stroke-width="2.2"/><path d="M1328.9 553L2118 873" stroke="#8b8485" stroke-opacity="0.0" stroke-width="2.2"/><rect x="883.3" y="816.5" width="40" height="11" fill="#7b7475"/><rect x="931.3" y="816.5" width="40" height="11" fill="#7b7475"/><rect x="1354.8" y="819.2" width="101" height="5.5" fill="#7b7475"/><rect x="1463.8" y="819.2" width="101" height="5.5" fill="#7b7475"/><rect x="984.9" y="709.8" width="23" height="5" fill="#7b7475"/><rect x="1015.9" y="709.8" width="23" height="5" fill="#7b7475"/><rect x="1295.9" y="710.8" width="67" height="3" fill="#7b7475"/><rect x="1370.9" y="710.8" width="67" height="3" fill="#7b7475"/><rect x="1033.2" y="656.0" width="17" height="3" fill="#7b7475"/><rect x="1058.2" y="656.0" width="17" height="3" fill="#7b7475"/><rect x="1266.4" y="656.5" width="50" height="2" fill="#7b7475"/><rect x="1324.4" y="656.5" width="50" height="2" fill="#7b7475"/><rect x="1776" y="818.5" width="82" height="5" fill="#7b7475"/></g><path d="M1503 529L1858 568" stroke="#8e888b" stroke-opacity="0.55" stroke-width="2" fill="none"/><path d="M507 157.5L1043 424V527.5L507 660Z" fill="url(#lw)"/><g clip-path="url(#lwc)" fill="none" stroke="#5f5b5c"><path d="M507 653L1043 525.5V527.5L507 660Z" fill="#716b6b" stroke="none"/><path d="M507 325.3L1043 458.5V459.5L507 328.7Z" fill="#625d5e" fill-opacity="0.8" stroke="none"/><path d="M507 490.8L1043 492.4V493.4L507 494.2Z" fill="#625d5e" fill-opacity="0.8" stroke="none"/><path d="M507 242L1043 441.6" stroke-width="0.7" stroke-opacity="0.2"/><path d="M507 410L1043 476.0" stroke-width="0.7" stroke-opacity="0.2"/><path d="M507 576L1043 510.0" stroke-width="0.7" stroke-opacity="0.2"/><path d="M520.7 100V700" stroke-width="3.2" stroke-opacity="0.85"/><path d="M653 100V700" stroke-width="2.9" stroke-opacity="0.78"/><path d="M741 100V700" stroke-width="2.5" stroke-opacity="0.71"/><path d="M804.6 100V700" stroke-width="2.2" stroke-opacity="0.64"/><path d="M851 100V700" stroke-width="1.9" stroke-opacity="0.57"/><path d="M888.5 100V700" stroke-width="1.6" stroke-opacity="0.50"/><path d="M918 100V700" stroke-width="1.2" stroke-opacity="0.43"/><path d="M942.5 100V700" stroke-width="0.9" stroke-opacity="0.36"/><path d="M962 100V700" stroke-width="0.7" stroke-opacity="0.29"/><path d="M978 100V700" stroke-width="0.7" stroke-opacity="0.28"/><path d="M993.7 100V700" stroke-width="0.7" stroke-opacity="0.28"/><path d="M1006 100V700" stroke-width="0.7" stroke-opacity="0.28"/><path d="M1016 100V700" stroke-width="0.7" stroke-opacity="0.28"/><path d="M1025 100V700" stroke-width="0.7" stroke-opacity="0.28"/><path d="M1032 100V700" stroke-width="0.7" stroke-opacity="0.28"/><path d="M1038 100V700" stroke-width="0.7" stroke-opacity="0.28"/><path d="M594 100V700" stroke-width="0.7" stroke-opacity="0.22"/><path d="M701 100V700" stroke-width="0.7" stroke-opacity="0.22"/><path d="M775 100V700" stroke-width="0.7" stroke-opacity="0.22"/><path d="M829 100V700" stroke-width="0.7" stroke-opacity="0.22"/><path d="M871 100V700" stroke-width="0.7" stroke-opacity="0.22"/><path d="M904 100V700" stroke-width="0.7" stroke-opacity="0.22"/><path d="M931 100V700" stroke-width="0.7" stroke-opacity="0.22"/><path d="M953 100V700" stroke-width="0.7" stroke-opacity="0.22"/></g><path d="M507 157.5L1043 424" stroke="#4e4c52" stroke-width="1.2" stroke-opacity="0.7" fill="none"/><rect x="1043" y="424" width="786" height="103.5" fill="#aaa09d"/><g fill="none" stroke="#837a78"><path d="M1043 458.5H1829" stroke-width="1.4" stroke-opacity="0.8"/><path d="M1043 493H1829" stroke-width="1.4" stroke-opacity="0.8"/><path d="M1043 424.5H1829" stroke-width="1" stroke-opacity="0.5"/><path d="M1043 527H1829" stroke-width="1" stroke-opacity="0.6"/><path d="M1045 424V527.5" stroke-width="4" stroke-opacity="0.95"/><path d="M1047 426V527.5" stroke-width="6" stroke-opacity="0.9" stroke-dasharray="3.2 3.6"/><path d="M1045 441H1054M1045 475H1054M1045 510H1054" stroke-width="1.2" stroke-opacity="0.8"/><path d="M1267.5 424V527.5" stroke-width="4" stroke-opacity="0.95"/><path d="M1267.5 426V527.5" stroke-width="8" stroke-opacity="0.95" stroke-dasharray="3.2 3.6"/><path d="M1258.5 441H1276.5" stroke-width="1.2" stroke-opacity="0.8"/><path d="M1258.5 475H1276.5" stroke-width="1.2" stroke-opacity="0.8"/><path d="M1258.5 510H1276.5" stroke-width="1.2" stroke-opacity="0.8"/><path d="M1492 424V527.5" stroke-width="4" stroke-opacity="0.95"/><path d="M1492 426V527.5" stroke-width="8" stroke-opacity="0.95" stroke-dasharray="3.2 3.6"/><path d="M1483 441H1501" stroke-width="1.2" stroke-opacity="0.8"/><path d="M1483 475H1501" stroke-width="1.2" stroke-opacity="0.8"/><path d="M1483 510H1501" stroke-width="1.2" stroke-opacity="0.8"/><path d="M1716.5 424V527.5" stroke-width="4" stroke-opacity="0.95"/><path d="M1716.5 426V527.5" stroke-width="8" stroke-opacity="0.95" stroke-dasharray="3.2 3.6"/><path d="M1707.5 441H1725.5" stroke-width="1.2" stroke-opacity="0.8"/><path d="M1707.5 475H1725.5" stroke-width="1.2" stroke-opacity="0.8"/><path d="M1707.5 510H1725.5" stroke-width="1.2" stroke-opacity="0.8"/><path d="M1099.1 424V527.5" stroke-width="0.8" stroke-opacity="0.45"/><path d="M1155.2 424V527.5" stroke-width="0.8" stroke-opacity="0.45"/><path d="M1211.3 424V527.5" stroke-width="0.8" stroke-opacity="0.45"/><path d="M1323.5 424V527.5" stroke-width="0.8" stroke-opacity="0.45"/><path d="M1379.6 424V527.5" stroke-width="0.8" stroke-opacity="0.45"/><path d="M1435.7 424V527.5" stroke-width="0.8" stroke-opacity="0.45"/><path d="M1547.9 424V527.5" stroke-width="0.8" stroke-opacity="0.45"/><path d="M1604.0 424V527.5" stroke-width="0.8" stroke-opacity="0.45"/><path d="M1660.1 424V527.5" stroke-width="0.8" stroke-opacity="0.45"/><path d="M1772.3 424V527.5" stroke-width="0.8" stroke-opacity="0.45"/></g><path d="M1829 424L1786 527.5H1829Z" fill="#4a5261"/><path d="M1829 423.5L1858 420.5V530L1829 527.5Z" fill="#464c5b"/><path d="M1829 458.5H1858M1829 493H1858" stroke="#3b404d" stroke-width="1" fill="none"/><path d="M1790 527.5H1858V531L1800 528.5Z" fill="#8b93a8" fill-opacity="0.6"/><path d="M1346 562L1356 562L1858 744V775.5L1600 665Z" fill="#7d7579" fill-opacity="0.7"/><path d="M1247 552.5H1277V557.5L1286 562H1266Z" fill="#7688a8"/><path d="M1277 492.5H1286V562L1277 557.5Z" fill="#67707f"/><rect x="1286" y="492.5" width="69.5" height="69.5" fill="#9c9290"/><g fill="none" stroke="#a9dccb" stroke-width="1.6"><rect x="1166" y="418.5" width="12" height="10"/><rect x="1177" y="417.5" width="22" height="12"/><rect x="1181" y="429.5" width="13" height="6"/></g><path d="M1113 556L1160 553L1200 556L1234 560L1226 563L1190 562L1178 565L1150 563L1140 565L1128 563L1114 561Z" fill="#6a7fa3"/><path d="M1192 498L1203 497L1206 512L1212 518L1216 540L1212 556L1196 560L1180 557L1184 540L1188 520Z" fill="#e6e2e6"/><path d="M1194 490H1204V500L1198 503L1193 499Z" fill="#e4d9da"/><rect x="1194" y="500" width="6" height="4" fill="#232a3f"/><path d="M1190 518L1200 514L1208 526L1215 545L1205 548L1198 538Z" fill="#2d3b66"/><path d="M1186 538L1204 545L1200 549L1184 543Z" fill="#1f2740"/><path d="M1203 523L1222 518L1227 528L1212 536L1206 532Z" fill="#2b2b2f"/><path d="M1204 528L1214 520L1224 524L1222 540L1210 544Z" fill="#3c4f86"/><path d="M1205 522L1222 519L1226 529L1212 534Z" fill="#2a2a2d"/><ellipse cx="1186" cy="557.5" rx="9" ry="3.5" fill="#ece3e3"/><ellipse cx="1172" cy="557" rx="4" ry="2.5" fill="#eeeaec"/><g transform="rotate(-20 1227 545)"><rect x="1212" y="530" width="30" height="30" rx="5" fill="#ece9ee"/><rect x="1213" y="534" width="28" height="3" fill="#8b93c0"/><rect x="1221" y="537" width="16" height="20" fill="#5f5558"/><circle cx="1226" cy="542" r="3.2" fill="#3f7fcc" stroke="#c8792a" stroke-width="1.4"/><circle cx="1226" cy="551" r="3.2" fill="#3f7fcc" stroke="#c8792a" stroke-width="1.4"/><rect x="1212" y="548" width="9" height="12" rx="3" fill="#eedfe0"/></g><path d="M1171 463L1178 458.5L1187 457L1199 459.5L1209 467L1212 477L1209 489L1206 494L1205.5 545L1203.5 545L1203 497L1199 492L1194 490L1193 500L1191 520L1188 538L1176 550L1152 558L1128 563.5L1136 556.5L1119 554L1113 551.5L1126 545L1142 537L1155 525L1163 505L1166 485L1168 470Z" fill="url(#hair)"/><path d="M1203 464L1208 469L1198 476L1199 470Z" fill="#2a3149"/><path d="M1183 462C1178 480 1176 510 1160 535M1190 465C1186 490 1186 515 1172 545" stroke="#3a4459" stroke-width="0.7" stroke-opacity="0.6" fill="none"/><rect x="533" y="583" width="264" height="264" fill="#ffffff"/></svg>
<div class="a" style="left:1944px;top:73px;width:616px;height:1297px;background:#383838;"></div>
<div class="a" style="left:1944px;top:73px;width:616px;height:19px;background:#282828;"></div>
<div class="a" style="left:1944px;top:73px;width:92px;height:19px;background:#383838;border-radius:3px 3px 0 0;"></div>
<svg class="a" style="left:1952px;top:77px;" width="11" height="11" viewBox="0 0 11 11"><circle cx="5.5" cy="5.5" r="5.300" fill="#c4c4c4"/><rect x="4.700" y="4.600" width="1.700" height="4.200" fill="#383838"/><rect x="4.700" y="2.200" width="1.700" height="1.600" fill="#383838"/></svg>
<div class="t" style="left:1968px;top:74px;height:20px;line-height:20px;color:#c4c4c4;letter-spacing:0.122px;">Inspector</div>
<svg class="a" style="left:2047px;top:77px;" width="10" height="13" viewBox="0 0 10 13"><path d="M5 0.500C7.400 0.500 9.200 2.200 9.200 4.400C9.200 6 8.300 7 7.400 7.800V8.800H2.600V7.800C1.700 7 0.800 6 0.800 4.400C0.800 2.200 2.600 0.500 5 0.500Z" fill="#c4c4c4"/><rect x="2.900" y="9.600" width="4.200" height="1.200" fill="#c4c4c4"/><rect x="3.500" y="11.400" width="3" height="1.100" fill="#c4c4c4"/></svg>
<div class="t" style="left:2062px;top:74px;height:20px;line-height:20px;color:#c4c4c4;letter-spacing:0.213px;">Lighting</div>
<svg class="a" style="left:2524px;top:77px;" width="9" height="10" viewBox="0 0 9 10"><path d="M6.600 4.600V2.800C6.600 1.500 5.700 0.600 4.500 0.600S2.400 1.400 2.400 2.500V3" fill="none" stroke="#c4c4c4" stroke-width="1.100"/><rect x="0.900" y="5" width="7.200" height="4.400" rx="0.600" fill="none" stroke="#c4c4c4" stroke-width="1.100"/></svg>
<svg class="a" style="left:2545px;top:77px;" width="2" height="10" viewBox="0 0 2 10"><rect x="0" y="0" width="2" height="2" fill="#c4c4c4"/><rect x="0" y="4" width="2" height="2" fill="#c4c4c4"/><rect x="0" y="8" width="2" height="2" fill="#c4c4c4"/></svg>
<div class="a" style="left:1944px;top:92px;width:616px;height:58px;background:#3c3c3c;border-bottom:1px solid #1f1f1f;"></div>
<div class="a" style="left:1950px;top:98px;width:32px;height:32px;background:#000;"></div>
<svg class="a" style="left:1950px;top:98px;" width="32" height="32" viewBox="0 0 32 32"><circle cx="16" cy="16" r="15.500" fill="#22222e"/><circle cx="16" cy="16" r="13.800" fill="#262634"/><circle cx="16" cy="7" r="1.300" fill="#3c3c50"/><circle cx="16" cy="25" r="1.300" fill="#3c3c50"/><circle cx="7" cy="16" r="1.300" fill="#3c3c50"/><circle cx="25" cy="16" r="1.300" fill="#3c3c50"/></svg>
<div class="t" style="left:1990px;top:97px;height:18px;line-height:18px;font-size:13.5px;color:#b8b8b8;letter-spacing:0.381px;">948 Texture 2Ds Import Settings</div>
<svg class="a" style="left:2515px;top:100px;" width="11" height="11" viewBox="0 0 11 11"><circle cx="5.500" cy="5.500" r="5.300" fill="#c4c4c4"/><path d="M3.600 4.200C3.600 2.900 4.400 2.300 5.500 2.300S7.400 3 7.400 4C7.400 5.300 5.500 5.300 5.500 6.700" fill="none" stroke="#3c3c3c" stroke-width="1.300"/><rect x="4.800" y="7.600" width="1.400" height="1.400" fill="#3c3c3c"/></svg>
<svg class="a" style="left:2530px;top:100px;" width="12" height="11" viewBox="0 0 12 11"><path d="M0.500 3H11.500M0.500 8H11.500" stroke="#c4c4c4" stroke-width="1.200"/><path d="M7.500 0.500V5.500M3.800 5.500V10.500" stroke="#c4c4c4" stroke-width="1.400"/></svg>
<svg class="a" style="left:2551px;top:100px;" width="2" height="10" viewBox="0 0 2 10"><rect x="0" y="0" width="2" height="2" fill="#c4c4c4"/><rect x="0" y="4" width="2" height="2" fill="#c4c4c4"/><rect x="0" y="8" width="2" height="2" fill="#c4c4c4"/></svg>
<div class="a" style="left:2512px;top:120px;width:44px;height:18px;background:#585858;border:1px solid #303030;border-bottom-color:#242424;border-radius:3px;"></div>
<div class="t" style="left:2513px;top:121px;height:16px;line-height:16px;color:#e4e4e4;width:42px;text-align:center;">Open</div>
<div class="t" style="left:1963px;top:163px;height:19px;line-height:19px;color:#c4c4c4;letter-spacing:0.263px;">Texture Type</div>
<div class="a" style="left:2201px;top:162px;width:355px;height:18px;background:#515151;border:1px solid #303030;border-bottom-color:#242424;border-radius:3px;"></div><div class="t" style="left:2205px;top:163px;height:16px;line-height:16px;color:#e4e4e4;letter-spacing:0.199px;">Default</div><svg class="a" style="left:2541px;top:169px;" width="7" height="4" viewBox="0 0 7 4"><path d="M0 0H7L3.5 4Z" fill="#d0d0d0"/></svg>
<div class="t" style="left:1963px;top:183px;height:19px;line-height:19px;color:#c4c4c4;letter-spacing:0.030px;">Texture Shape</div>
<div class="a" style="left:2201px;top:182px;width:355px;height:18px;background:#515151;border:1px solid #303030;border-bottom-color:#242424;border-radius:3px;"></div><div class="t" style="left:2205px;top:183px;height:16px;line-height:16px;color:#e4e4e4;letter-spacing:-0.492px;">2D</div><svg class="a" style="left:2541px;top:189px;" width="7" height="4" viewBox="0 0 7 4"><path d="M0 0H7L3.5 4Z" fill="#d0d0d0"/></svg>
<div class="t" style="left:1963px;top:211px;height:19px;line-height:19px;color:#c4c4c4;letter-spacing:-0.087px;">sRGB (Color Texture)</div>
<div class="a" style="left:2201px;top:212px;width:14px;height:14px;background:#2a2a2a;border:1px solid #1f1f1f;border-radius:3px;"></div><svg class="a" style="left:2203px;top:215px;" width="10" height="8" viewBox="0 0 10 8"><path d="M1 4.2L3.800 7L9 1.2" fill="none" stroke="#f0f0f0" stroke-width="1.6"/></svg>
<div class="t" style="left:1963px;top:231px;height:19px;line-height:19px;color:#c4c4c4;letter-spacing:-0.047px;">Alpha Source</div>
<div class="a" style="left:2201px;top:230px;width:355px;height:18px;background:#515151;border:1px solid #303030;border-bottom-color:#242424;border-radius:3px;"></div><div class="t" style="left:2205px;top:231px;height:16px;line-height:16px;color:#e4e4e4;letter-spacing:0.090px;">Input Texture Alpha</div><svg class="a" style="left:2541px;top:237px;" width="7" height="4" viewBox="0 0 7 4"><path d="M0 0H7L3.5 4Z" fill="#d0d0d0"/></svg>
<div class="t" style="left:1963px;top:251px;height:19px;line-height:19px;color:#c4c4c4;letter-spacing:-0.018px;">Alpha Is Transparency</div>
<div class="a" style="left:2201px;top:252px;width:14px;height:14px;background:#2a2a2a;border:1px solid #1f1f1f;border-radius:3px;"></div>
<svg class="a" style="left:1952px;top:281px;" width="7" height="9" viewBox="0 0 7 9"><path d="M0 0L7 4.5L0 9Z" fill="#6e6e6e"/></svg>
<div class="t" style="left:1963px;top:277px;height:19px;line-height:19px;color:#c4c4c4;letter-spacing:0.174px;">Advanced</div>
<div class="t" style="left:1963px;top:303px;height:19px;line-height:19px;color:#c4c4c4;letter-spacing:-0.097px;">Wrap Mode</div>
<div class="a" style="left:2201px;top:302px;width:355px;height:18px;background:#515151;border:1px solid #303030;border-bottom-color:#242424;border-radius:3px;"></div><div class="t" style="left:2205px;top:303px;height:16px;line-height:16px;color:#e4e4e4;letter-spacing:-0.052px;">Repeat</div><svg class="a" style="left:2541px;top:309px;" width="7" height="4" viewBox="0 0 7 4"><path d="M0 0H7L3.5 4Z" fill="#d0d0d0"/></svg>
<div class="t" style="left:1963px;top:323px;height:19px;line-height:19px;color:#c4c4c4;letter-spacing:-0.001px;">Filter Mode</div>
<div class="a" style="left:2201px;top:322px;width:355px;height:18px;background:#515151;border:1px solid #303030;border-bottom-color:#242424;border-radius:3px;"></div><div class="t" style="left:2205px;top:323px;height:16px;line-height:16px;color:#e4e4e4;letter-spacing:0.037px;">Bilinear</div><svg class="a" style="left:2541px;top:329px;" width="7" height="4" viewBox="0 0 7 4"><path d="M0 0H7L3.5 4Z" fill="#d0d0d0"/></svg>
<div class="t" style="left:1963px;top:343px;height:19px;line-height:19px;color:#c4c4c4;letter-spacing:-0.013px;">Aniso Level</div>
<div class="a" style="left:2201px;top:350px;width:300px;height:2px;background:#5a5a5a;height:1.500px;"></div>
<div class="a" style="left:2219px;top:346px;width:10px;height:10px;background:#999;border-radius:5px;"></div>
<div class="a" style="left:2506px;top:343px;width:49px;height:16px;background:#2a2a2a;border:1px solid #212121;border-radius:3px;"></div>
<div class="t" style="left:2509px;top:344px;height:17px;line-height:17px;color:#d2d2d2;">1</div>
<div class="a" style="left:1962px;top:374px;width:594px;height:132px;background:#3f3f3f;border:1px solid #242424;border-radius:3px;"></div>
<div class="a" style="left:2110px;top:375px;width:445px;height:21px;background:#353535;border-bottom:1px solid #242424;border-radius:0 3px 0 0;"></div>
<div class="a" style="left:2110px;top:375px;width:1px;height:21px;background:#242424;"></div>
<div class="a" style="left:2259px;top:375px;width:1px;height:20px;background:#2a2a2a;"></div>
<div class="a" style="left:2408px;top:375px;width:1px;height:20px;background:#2a2a2a;"></div>
<div class="t" style="left:1961px;top:376px;height:20px;line-height:20px;color:#c4c4c4;width:147px;text-align:center;">Default</div>
<svg class="a" style="left:2177px;top:379px;" width="14" height="12" viewBox="0 0 14 12"><rect x="0.600" y="0.600" width="12.800" height="8" rx="1" fill="none" stroke="#c4c4c4" stroke-width="1.200"/><rect x="6.300" y="8.600" width="1.400" height="2" fill="#c4c4c4"/><rect x="3.500" y="10.500" width="7" height="1.200" fill="#c4c4c4"/></svg>
<svg class="a" style="left:2326px;top:378px;" width="14" height="14" viewBox="0 0 14 14"><path d="M3.200 4.600H10.800V10.800C10.800 11.200 10.500 11.500 10.100 11.500H3.900C3.500 11.500 3.200 11.200 3.200 10.800Z" fill="#c4c4c4"/><path d="M3.200 3.900C3.400 2.200 5 1.200 7 1.200S10.600 2.200 10.800 3.900Z" fill="#c4c4c4"/><rect x="0.800" y="4.700" width="1.700" height="4.800" rx="0.800" fill="#c4c4c4"/><rect x="11.500" y="4.700" width="1.700" height="4.800" rx="0.800" fill="#c4c4c4"/><rect x="4.500" y="10.500" width="1.800" height="3.200" rx="0.800" fill="#c4c4c4"/><rect x="7.700" y="10.500" width="1.800" height="3.200" rx="0.800" fill="#c4c4c4"/><path d="M4.400 0.300L5.400 1.800M9.600 0.300L8.600 1.800" stroke="#c4c4c4" stroke-width="0.700"/></svg>
<svg class="a" style="left:2476px;top:377px;" width="11" height="15" viewBox="0 0 11 15"><path d="M1 0H10" stroke="#c4c4c4" stroke-width="1.400" stroke-dasharray="1.500 0.700"/><path d="M0.500 2.500H10.500L9.600 12.500L5.500 14.200L1.400 12.500Z" fill="#c4c4c4"/><path d="M8 5H3.200L3.400 7.600H7.700L7.500 10.600L5.500 11.400L3.500 10.600L3.400 9.400" fill="none" stroke="#3a3a3a" stroke-width="1.200"/></svg>
<div class="t" style="left:1968px;top:404px;height:19px;line-height:19px;color:#c4c4c4;letter-spacing:0.074px;">Max Size</div>
<div class="a" style="left:2206px;top:403px;width:346px;height:18px;background:#515151;border:1px solid #303030;border-bottom-color:#242424;border-radius:3px;"></div><div class="t" style="left:2210px;top:404px;height:16px;line-height:16px;color:#e4e4e4;letter-spacing:0.547px;">2048</div><svg class="a" style="left:2537px;top:410px;" width="7" height="4" viewBox="0 0 7 4"><path d="M0 0H7L3.5 4Z" fill="#d0d0d0"/></svg>
<div class="t" style="left:1968px;top:424px;height:19px;line-height:19px;color:#c4c4c4;letter-spacing:0.044px;">Resize Algorithm</div>
<div class="a" style="left:2206px;top:423px;width:346px;height:18px;background:#515151;border:1px solid #303030;border-bottom-color:#242424;border-radius:3px;"></div><div class="t" style="left:2210px;top:424px;height:16px;line-height:16px;color:#e4e4e4;letter-spacing:0.328px;">Mitchell</div><svg class="a" style="left:2537px;top:430px;" width="7" height="4" viewBox="0 0 7 4"><path d="M0 0H7L3.5 4Z" fill="#d0d0d0"/></svg>
<div class="t" style="left:1968px;top:444px;height:19px;line-height:19px;color:#c4c4c4;letter-spacing:-0.096px;">Format</div>
<div class="a" style="left:2206px;top:443px;width:346px;height:18px;background:#515151;border:1px solid #303030;border-bottom-color:#242424;border-radius:3px;"></div><div class="t" style="left:2210px;top:444px;height:16px;line-height:16px;color:#e4e4e4;letter-spacing:0.102px;">Automatic</div><svg class="a" style="left:2537px;top:450px;" width="7" height="4" viewBox="0 0 7 4"><path d="M0 0H7L3.5 4Z" fill="#d0d0d0"/></svg>
<div class="t" style="left:1968px;top:464px;height:19px;line-height:19px;color:#c4c4c4;letter-spacing:-0.104px;">Compression</div>
<div class="a" style="left:2206px;top:463px;width:346px;height:18px;background:#515151;border:1px solid #303030;border-bottom-color:#242424;border-radius:3px;"></div><div class="t" style="left:2210px;top:464px;height:16px;line-height:16px;color:#e4e4e4;letter-spacing:-0.011px;">Normal Quality</div><svg class="a" style="left:2537px;top:470px;" width="7" height="4" viewBox="0 0 7 4"><path d="M0 0H7L3.5 4Z" fill="#d0d0d0"/></svg>
<div class="t" style="left:1968px;top:484px;height:19px;line-height:19px;color:#c4c4c4;letter-spacing:-0.073px;">Use Crunch Compression</div>
<div class="a" style="left:2206px;top:485px;width:14px;height:14px;background:#2a2a2a;border:1px solid #1f1f1f;border-radius:3px;"></div>
<div class="a" style="left:2461px;top:519px;width:47px;height:17px;background:#4a4a4a;border-radius:3px;"></div>
<div class="t" style="left:2461px;top:520px;height:17px;line-height:17px;color:#8e8e8e;width:47px;text-align:center;">Revert</div>
<div class="a" style="left:2513px;top:519px;width:42px;height:17px;background:#4a4a4a;border-radius:3px;"></div>
<div class="t" style="left:2513px;top:520px;height:17px;line-height:17px;color:#8e8e8e;width:42px;text-align:center;">Apply</div>
<svg class="a" style="left:1950px;top:552px;" width="9" height="7" viewBox="0 0 9 7"><path d="M0 0H9L4.5 7Z" fill="#6e6e6e"/></svg>
<div class="t" style="left:1964px;top:547px;height:19px;line-height:19px;color:#c8c8c8;font-weight:bold;letter-spacing:-0.061px;">Asset PostProcessors</div>
<div class="a" style="left:1962px;top:565px;width:594px;height:30px;background:#3f3f3f;border:1px solid #242424;border-radius:3px;"></div>
<svg class="a" style="left:1974px;top:573px;" width="7" height="9" viewBox="0 0 7 9"><path d="M0 0L7 4.5L0 9Z" fill="#6e6e6e"/></svg>
<div class="t" style="left:1985px;top:569px;height:19px;line-height:19px;color:#c4c4c4;letter-spacing:-0.038px;">UnityEditor.ShaderGraph.ShaderGraphAssetPostProcessor</div>
<div class="a" style="left:1944px;top:877px;width:616px;height:1px;background:#1f1f1f;"></div>
<div class="a" style="left:1944px;top:878px;width:616px;height:21px;background:#3c3c3c;border-bottom:1px solid #262626;"></div>
<div class="t" style="left:1951px;top:880px;height:19px;line-height:19px;color:#c4c4c4;font-weight:bold;letter-spacing:0.269px;">948 Texture 2Ds</div>
<div class="a" style="left:2055px;top:887px;width:238px;height:1px;background:#5a5a5a;"></div>
<div class="a" style="left:2055px;top:890px;width:238px;height:1px;background:#5a5a5a;"></div>
<div class="a" style="left:2296px;top:878px;width:33px;height:19px;background:#505050;"></div>
<div class="a" style="left:2295px;top:878px;width:1px;height:19px;background:#2e2e2e;"></div>
<div class="a" style="left:2329px;top:878px;width:1px;height:19px;background:#2e2e2e;"></div>
<div class="a" style="left:2355px;top:878px;width:1px;height:19px;background:#2e2e2e;"></div>
<div class="a" style="left:2381px;top:878px;width:1px;height:19px;background:#2e2e2e;"></div>
<div class="a" style="left:2407px;top:878px;width:1px;height:19px;background:#2e2e2e;"></div>
<div class="a" style="left:2433px;top:878px;width:1px;height:19px;background:#2e2e2e;"></div>
<div class="a" style="left:2544px;top:878px;width:1px;height:19px;background:#2e2e2e;"></div>
<div class="t" style="left:2296px;top:879px;height:19px;line-height:19px;font-size:11px;color:#d2d2d2;font-weight:bold;width:33px;text-align:center;">RGB</div>
<div class="t" style="left:2330px;top:879px;height:19px;line-height:19px;font-size:11px;color:#c4c4c4;font-weight:bold;width:25px;text-align:center;">R</div>
<div class="t" style="left:2356px;top:879px;height:19px;line-height:19px;font-size:11px;color:#c4c4c4;font-weight:bold;width:25px;text-align:center;">G</div>
<div class="t" style="left:2382px;top:879px;height:19px;line-height:19px;font-size:11px;color:#c4c4c4;font-weight:bold;width:25px;text-align:center;">B</div>
<div class="t" style="left:2408px;top:879px;height:19px;line-height:19px;font-size:11px;color:#c4c4c4;font-weight:bold;width:25px;text-align:center;">A</div>
<svg class="a" style="left:2438px;top:883px;" width="10.5" height="10.5" viewBox="0 0 10.5 10.5"><rect x="0.0" y="0.0" width="3.5" height="3.5" fill="#f0e6ee"/><rect x="0.0" y="3.5" width="3.5" height="3.5" fill="#d9365a"/><rect x="0.0" y="7.0" width="3.5" height="3.5" fill="#3a3fb0"/><rect x="3.5" y="0.0" width="3.5" height="3.5" fill="#d9365a"/><rect x="3.5" y="3.5" width="3.5" height="3.5" fill="#3a3fb0"/><rect x="3.5" y="7.0" width="3.5" height="3.5" fill="#f0e6ee"/><rect x="7.0" y="0.0" width="3.5" height="3.5" fill="#3a3fb0"/><rect x="7.0" y="3.5" width="3.5" height="3.5" fill="#d9365a"/><rect x="7.0" y="7.0" width="3.5" height="3.5" fill="#3a3fb0"/></svg>
<div class="a" style="left:2457px;top:888px;width:60px;height:1px;background:#5a5a5a;height:1.500px;"></div>
<div class="a" style="left:2511px;top:883px;width:10px;height:10px;background:#999;border-radius:5px;"></div>
<svg class="a" style="left:2528px;top:883px;" width="11.0" height="11.0" viewBox="0 0 11.0 11.0"><rect x="0.0" y="0.0" width="2.2" height="2.2" fill="#f0e6ee"/><rect x="0.0" y="2.2" width="2.2" height="2.2" fill="#d9365a"/><rect x="0.0" y="4.4" width="2.2" height="2.2" fill="#3a3fb0"/><rect x="0.0" y="6.6000000000000005" width="2.2" height="2.2" fill="#d9365a"/><rect x="0.0" y="8.8" width="2.2" height="2.2" fill="#3a3fb0"/><rect x="2.2" y="0.0" width="2.2" height="2.2" fill="#d9365a"/><rect x="2.2" y="2.2" width="2.2" height="2.2" fill="#3a3fb0"/><rect x="2.2" y="4.4" width="2.2" height="2.2" fill="#f0e6ee"/><rect x="2.2" y="6.6000000000000005" width="2.2" height="2.2" fill="#3a3fb0"/><rect x="2.2" y="8.8" width="2.2" height="2.2" fill="#d9365a"/><rect x="4.4" y="0.0" width="2.2" height="2.2" fill="#3a3fb0"/><rect x="4.4" y="2.2" width="2.2" height="2.2" fill="#d9365a"/><rect x="4.4" y="4.4" width="2.2" height="2.2" fill="#3a3fb0"/><rect x="4.4" y="6.6000000000000005" width="2.2" height="2.2" fill="#d9365a"/><rect x="4.4" y="8.8" width="2.2" height="2.2" fill="#f0e6ee"/><rect x="6.6000000000000005" y="0.0" width="2.2" height="2.2" fill="#d9365a"/><rect x="6.6000000000000005" y="2.2" width="2.2" height="2.2" fill="#f0e6ee"/><rect x="6.6000000000000005" y="4.4" width="2.2" height="2.2" fill="#d9365a"/><rect x="6.6000000000000005" y="6.6000000000000005" width="2.2" height="2.2" fill="#3a3fb0"/><rect x="6.6000000000000005" y="8.8" width="2.2" height="2.2" fill="#d9365a"/><rect x="8.8" y="0.0" width="2.2" height="2.2" fill="#3a3fb0"/><rect x="8.8" y="2.2" width="2.2" height="2.2" fill="#d9365a"/><rect x="8.8" y="4.4" width="2.2" height="2.2" fill="#3a3fb0"/><rect x="8.8" y="6.6000000000000005" width="2.2" height="2.2" fill="#f0e6ee"/><rect x="8.8" y="8.8" width="2.2" height="2.2" fill="#3a3fb0"/></svg>
<svg class="a" style="left:2550px;top:882px;" width="2" height="10" viewBox="0 0 2 10"><rect x="0" y="0" width="2" height="2" fill="#c4c4c4"/><rect x="0" y="4" width="2" height="2" fill="#c4c4c4"/><rect x="0" y="8" width="2" height="2" fill="#c4c4c4"/></svg>
<div class="a" style="left:1944px;top:899px;width:616px;height:421px;background:#2d2d2d;"></div>
<svg class="a" style="left:1960px;top:919px" width="74" height="74" viewBox="0 0 74 74"><rect width="74" height="74" fill="#000"/><circle cx="37" cy="37" r="36.500" fill="#2a2a38"/><circle cx="37" cy="37" r="34" fill="#232330"/><circle cx="37" cy="16.500" r="3" fill="#34344a"/><circle cx="37" cy="57.500" r="3" fill="#34344a"/><circle cx="16.500" cy="37" r="3" fill="#34344a"/><circle cx="57.500" cy="37" r="3" fill="#34344a"/></svg>
<div class="a lab" style="left:1961.5px;top:993.5px;width:71px;height:16px;"><span style="left:-3.0px;letter-spacing:0.111px">stick_circle_nub</span></div>
<svg class="a" style="left:2045px;top:919px" width="74" height="74" viewBox="0 0 74 74"><rect width="74" height="74" fill="#000"/><path d="M27 0H47C48.500 0 50 1.500 50 3V24H71C72.500 24 74 25.500 74 27V47C74 48.500 72.500 50 71 50H50V71C50 72.500 48.500 74 47 74H27C25.500 74 24 72.500 24 71V50H3C1.500 50 0 48.500 0 47V27C0 25.500 1.500 24 3 24H24V3C24 1.500 25.500 0 27 0Z" fill="#eef3f4"/><path d="M28 4H46V28H70V46H46V70H28V46H4V28H28Z" fill="#e1e8ea"/><path d="M37 11L40.500 17H33.500ZM37 63L40.500 57H33.500ZM11 37L17 33.500V40.500ZM63 37L57 33.500V40.500Z" fill="#fff"/><circle cx="37" cy="37" r="2.200" fill="#fff"/></svg>
<div class="a lab" style="left:2046.5px;top:993.5px;width:71px;height:16px;"><span style="left:7.5px;letter-spacing:-0.022px">dpad_small</span></div>
<svg class="a" style="left:2130px;top:919px" width="74" height="74" viewBox="0 0 74 74"><rect width="74" height="74" fill="#303030"/><rect x="5" y="5" width="64" height="64" fill="#000"/><path d="M37 5C54 5 67 14 67 31C67 38 65.500 42 65 46C64.500 50 65 54 62 56.500C59 58.500 54 58 51.500 59L50.500 65C50.200 67.500 48.500 68.500 46.500 68.500H27.500C25.500 68.500 23.800 67.500 23.500 65L22.500 59C20 58 15 58.500 12 56.500C9 54 9.500 50 9 46C8.500 42 7 38 7 31C7 14 20 5 37 5Z" fill="#fff"/><circle cx="27" cy="43.500" r="5.700" fill="#000"/><circle cx="46.800" cy="43.500" r="5.700" fill="#000"/></svg>
<div class="a lab" style="left:2131.5px;top:993.5px;width:71px;height:16px;"><span style="left:11.5px;letter-spacing:-0.111px">icon_skull</span></div>
<svg class="a" style="left:2215px;top:919px" width="74" height="74" viewBox="0 0 74 74"><rect width="74" height="74" fill="#000"/><path d="M24 1C27 -1 35 -1 36 3C37 10 35 24 40 30C43 33 43 41 40 44C35 50 37 64 36 71C35 75 27 75 24 73L9 49C6 47 0 44 0 37S6 27 9 25Z" fill="#fff"/><path d="M49 13C62 13 73 23 73 37S62 61 49 61V48C55 48 60 43 60 37S55 26 49 26Z" fill="#fff"/></svg>
<div class="a lab" style="left:2216.5px;top:993.5px;width:71px;height:16px;"><span style="left:8.5px;letter-spacing:0.027px">icon_sound</span></div>
<svg class="a" style="left:2299px;top:919px" width="74" height="74" viewBox="0 0 74 74"><rect width="74" height="74" fill="#000"/><path d="M37 3.500C38.500 3.500 40 4 41 4.600L66 19.500C68.500 21 69.500 23 69.500 25.500V48.500C69.500 51 68.500 53 66 54.500L41 69.400C40 70 38.500 70.500 37 70.500S34 70 33 69.400L8 54.500C5.500 53 4.500 51 4.500 48.500V25.500C4.500 23 5.500 21 8 19.500L33 4.600C34 4 35.500 3.500 37 3.500Z" fill="none" stroke="#fff" stroke-width="4.5" transform="translate(37 37) scale(1.05 1.035) translate(-37 -37)"/><path d="M37 10L40.500 15.500H33.500ZM37 64L40.500 58.500H33.500ZM9.500 37L15 33.500V40.500ZM64.500 37L59 33.500V40.500ZM17 17.500L23 18.500L19 23.500ZM57 17.500L51 18.500L55 23.500ZM17 56.500L23 55.500L19 50.500ZM57 56.500L51 55.500L55 50.500Z" fill="#fff"/></svg>
<div class="a lab" style="left:2300.5px;top:993.5px;width:71px;height:16px;"><span style="left:0.5px;letter-spacing:-0.037px">ick_hexagon_pa</span></div>
<svg class="a" style="left:2384px;top:919px" width="74" height="74" viewBox="0 0 74 74"><rect width="74" height="74" fill="#000"/><defs><linearGradient id="og" x1="0" y1="0" x2="0" y2="1"><stop offset="0" stop-color="#ffc52e"/><stop offset="1" stop-color="#ff9d0a"/></linearGradient></defs><path d="M36 0.500H70.500C72.500 0.500 73.500 1.500 73.500 3.500V70.500C73.500 72.500 72.500 73.500 70.500 73.500H36C34.500 73.500 33.500 73 32.500 72L1.500 39C0.300 37.800 0.300 36.200 1.500 35L32.500 2C33.500 1 34.500 0.500 36 0.500Z" fill="url(#og)"/><path d="M38.500 8H66V66H38.500L10.500 37Z" fill="#000"/></svg>
<div class="a lab" style="left:2385.5px;top:993.5px;width:71px;height:16px;"><span style="left:0.0px;letter-spacing:-0.106px">lement_east_hig</span></div>
<svg class="a" style="left:2469px;top:919px" width="74" height="74" viewBox="0 0 74 74"><rect width="74" height="74" fill="#000"/><polygon points="72.7,48.6 59.0,67.3 37.0,74.5 15.0,67.3 1.3,48.6 1.3,25.4 15.0,6.7 37.0,-0.5 59.0,6.7 72.7,25.4" fill="#eef3f4"/><polygon points="70.3,47.8 57.6,65.3 37.0,72.0 16.4,65.3 3.7,47.8 3.7,26.2 16.4,8.7 37.0,2.0 57.6,8.7 70.3,26.2" fill="#e1e9ea"/></svg>
<div class="a lab" style="left:2470.5px;top:993.5px;width:71px;height:16px;"><span style="left:0.5px;letter-spacing:-0.214px">ick_polygon_pa</span></div>
<svg class="a" style="left:1960px;top:1016px" width="74" height="74" viewBox="0 0 74 74"><rect width="74" height="74" fill="#303030"/><rect x="5" y="5" width="64" height="64" fill="#000"/><defs><linearGradient id="sq" x1="0" y1="0" x2="0" y2="1"><stop offset="0" stop-color="#23232f"/><stop offset="1" stop-color="#2c2c3a"/></linearGradient></defs><rect x="5" y="5" width="64" height="64" rx="2.500" fill="#2d2d3c"/><rect x="8.500" y="8.500" width="57" height="57" fill="url(#sq)"/></svg>
<div class="a lab" style="left:1961.5px;top:1090.5px;width:71px;height:16px;"><span style="left:1.0px;letter-spacing:-0.140px">tick_square_nub</span></div>
<svg class="a" style="left:2045px;top:1016px" width="74" height="74" viewBox="0 0 74 74"><rect width="74" height="74" fill="#000"/></svg>
<div class="a lab" style="left:2046.5px;top:1090.5px;width:71px;height:16px;"><span style="left:0.5px;letter-spacing:-0.214px">ick_polygon_pa</span></div>
<svg class="a" style="left:2130px;top:1016px" width="74" height="74" viewBox="0 0 74 74"><rect width="74" height="74" fill="#303030"/><rect x="5" y="5" width="64" height="64" fill="#000"/><circle cx="37" cy="37" r="32" fill="#282834"/><circle cx="37" cy="37" r="25.500" fill="#212128"/></svg>
<div class="a lab" style="left:2131.5px;top:1090.5px;width:71px;height:16px;"><span style="left:3.0px;letter-spacing:0.188px">button_circle</span></div>
<svg class="a" style="left:2215px;top:1016px" width="74" height="74" viewBox="0 0 74 74"><rect width="74" height="74" fill="#000"/></svg>
<div class="a lab" style="left:2216.5px;top:1090.5px;width:71px;height:16px;"><span style="left:0.5px;letter-spacing:-0.214px">ick_polygon_pa</span></div>
<svg class="a" style="left:2299px;top:1016px" width="74" height="74" viewBox="0 0 74 74"><rect width="74" height="74" fill="#303030"/><rect x="5" y="5" width="64" height="64" fill="#000"/></svg>
<div class="a lab" style="left:2300.5px;top:1090.5px;width:71px;height:16px;"><span style="left:-2.5px;letter-spacing:-0.061px">button_diamond</span></div>
<svg class="a" style="left:2384px;top:1016px" width="74" height="74" viewBox="0 0 74 74"><rect width="74" height="74" fill="#000"/><path d="M27 0H47C48.500 0 50 1.500 50 3V24H71C72.500 24 74 25.500 74 27V47C74 48.500 72.500 50 71 50H50V71C50 72.500 48.500 74 47 74H27C25.500 74 24 72.500 24 71V50H3C1.500 50 0 48.500 0 47V27C0 25.500 1.500 24 3 24H24V3C24 1.500 25.500 0 27 0Z" fill="#eef1f3"/><path d="M28 4H46V28H70V46H46V70H28V46H4V28H28Z" fill="#dfe2e5"/><path d="M37 11L40.500 17H33.500ZM37 63L40.500 57H33.500ZM11 37L17 33.500V40.500ZM63 37L57 33.500V40.500Z" fill="#fff"/><circle cx="37" cy="37" r="2.200" fill="#fff"/></svg>
<div class="a lab" style="left:2385.5px;top:1090.5px;width:71px;height:16px;"><span style="left:7.5px;letter-spacing:-0.022px">dpad_small</span></div>
<svg class="a" style="left:2469px;top:1016px" width="74" height="74" viewBox="0 0 74 74"><rect width="74" height="74" fill="#000"/><path d="M10 10C10 7.500 11.500 6 14 6H47C58 6 66 13 66 25C66 33 62 39 56 42L65 64C66 66.500 64.500 68 62 68H50C48 68 46.500 67 45.500 65L38 45H29V64C29 66.500 27.500 68 25 68H14C11.500 68 10 66.500 10 64Z" fill="#fff"/><path d="M29 21H44C47 21 49 23 49 26C49 29 47 31 44 31H29C27.500 31 26.500 30 26.500 28.500V23.500C26.500 22 27.500 21 29 21Z" fill="#000"/></svg>
<div class="a lab" style="left:2470.5px;top:1090.5px;width:71px;height:16px;"><span style="left:2.5px;letter-spacing:0.141px">icon_button_r</span></div>
<svg class="a" style="left:1960px;top:1113px" width="74" height="74" viewBox="0 0 74 74"><rect width="74" height="74" fill="#000"/><circle cx="37" cy="37" r="37" fill="#fff"/><circle cx="37" cy="37" r="27.500" fill="#000"/><circle cx="37" cy="37" r="18.500" fill="#fff"/><circle cx="37" cy="37" r="9" fill="#000"/></svg>
<div class="a lab" style="left:1961.5px;top:1187.5px;width:71px;height:16px;"><span style="left:6.5px;letter-spacing:0.229px">icon_target</span></div>
<svg class="a" style="left:2045px;top:1113px" width="74" height="74" viewBox="0 0 74 74"><rect width="74" height="74" fill="#303030"/><rect x="5" y="5" width="64" height="64" fill="#000"/><g transform="translate(5 5) scale(0.865)"><path d="M36 0.500H70.500C72.500 0.500 73.500 1.500 73.500 3.500V70.500C73.500 72.500 72.500 73.500 70.500 73.500H36C34.500 73.500 33.500 73 32.500 72L1.500 39C0.300 37.800 0.300 36.200 1.500 35L32.500 2C33.500 1 34.500 0.500 36 0.500Z" fill="url(#og)"/><path d="M38.500 8H66V66H38.500L10.500 37Z" fill="#000"/></g></svg>
<div class="a lab" style="left:2046.5px;top:1187.5px;width:71px;height:16px;"><span style="left:-0.30000000000000004px;letter-spacing:0.211px">ction_left_highli</span></div>
<svg class="a" style="left:2130px;top:1113px" width="74" height="74" viewBox="0 0 74 74"><rect width="74" height="74" fill="#000"/></svg>
<div class="a lab" style="left:2131.5px;top:1187.5px;width:71px;height:16px;"><span style="left:-0.30000000000000004px;letter-spacing:-0.209px">ad_element_wes</span></div>
<svg class="a" style="left:2215px;top:1113px" width="74" height="74" viewBox="0 0 74 74"><rect width="74" height="74" fill="#000"/><path d="M37 3.500C38.500 3.500 40 4 41 4.600L66 19.500C68.500 21 69.500 23 69.500 25.500V48.500C69.500 51 68.500 53 66 54.500L41 69.400C40 70 38.500 70.500 37 70.500S34 70 33 69.400L8 54.500C5.500 53 4.500 51 4.500 48.500V25.500C4.500 23 5.500 21 8 19.500L33 4.600C34 4 35.500 3.500 37 3.500Z" fill="none" stroke="#fff" stroke-width="5" transform="translate(37 37) scale(1.05 1.035) translate(-37 -37)"/><rect x="34" y="34" width="6" height="6" fill="#fff"/></svg>
<div class="a lab" style="left:2216.5px;top:1187.5px;width:71px;height:16px;"><span style="left:0.5px;letter-spacing:-0.073px">ick_hexagon_nu</span></div>
<svg class="a" style="left:2299px;top:1113px" width="74" height="74" viewBox="0 0 74 74"><rect width="74" height="74" fill="#303030"/><rect x="0" y="18.500" width="74" height="37" rx="3" fill="#8a5df0"/><rect x="1.200" y="19.700" width="71.600" height="34.600" rx="2.500" fill="none" stroke="#b79cff" stroke-width="0.800"/><rect x="4" y="22.500" width="66" height="29" rx="1" fill="#000"/></svg>
<div class="a lab" style="left:2300.5px;top:1187.5px;width:71px;height:16px;"><span style="left:-3.5px;letter-spacing:-0.161px">_square_wide_hi</span></div>
<svg class="a" style="left:2384px;top:1113px" width="74" height="74" viewBox="0 0 74 74"><rect width="74" height="74" fill="#000"/></svg>
<div class="a lab" style="left:2385.5px;top:1187.5px;width:71px;height:16px;"><span style="left:0.5px;letter-spacing:-0.223px">ick_polygon_nub</span></div>
<svg class="a" style="left:2469px;top:1113px" width="74" height="74" viewBox="0 0 74 74"><rect width="74" height="74" fill="#303030"/><rect x="5" y="5" width="64" height="64" fill="#000"/></svg>
<div class="a lab" style="left:2470.5px;top:1187.5px;width:71px;height:16px;"><span style="left:2.5px;letter-spacing:0.210px">direction_left</span></div>
<svg class="a" style="left:1960px;top:1209px" width="74" height="74" viewBox="0 0 74 74"><rect width="74" height="74" fill="#000"/><rect x="0" y="0" width="74" height="74" rx="3" fill="#2b2b39"/><rect x="3.500" y="3.500" width="67" height="67" rx="1.500" fill="#212129"/><path d="M37 9L40 13.500H34ZM37 65L40 60.500H34ZM9 37L13.500 34V40ZM65 37L60.500 34V40ZM13.500 13.500L18.500 14.500L14.500 18.500ZM60.500 13.500L55.500 14.500L59.500 18.500ZM13.500 60.500L18.500 59.500L14.500 55.500ZM60.500 60.500L55.500 59.500L59.500 55.500Z" fill="#2f2f42"/></svg>
<div class="a lab" style="left:1961.5px;top:1283.5px;width:71px;height:16px;"><span style="left:0.5px;letter-spacing:-0.106px">tick_square_pad</span></div>
<svg class="a" style="left:2045px;top:1209px" width="74" height="74" viewBox="0 0 74 74"><rect width="74" height="74" fill="#000"/><path d="M36 0.500H70.500C72.500 0.500 73.500 1.500 73.500 3.500V70.500C73.500 72.500 72.500 73.500 70.500 73.500H36C34.500 73.500 33.500 73 32.500 72L1.500 39C0.300 37.800 0.300 36.200 1.500 35L32.500 2C33.500 1 34.500 0.500 36 0.500Z" fill="#fff"/><path d="M38.500 8H66V66H38.500L10.500 37Z" fill="#000"/><path d="M40 30.500L51 37L40 43.500Z" fill="#fff"/></svg>
<div class="a lab" style="left:2046.5px;top:1283.5px;width:71px;height:16px;"><span style="left:0.5px;letter-spacing:-0.192px">ad_element_eas</span></div>
<svg class="a" style="left:2130px;top:1209px" width="74" height="74" viewBox="0 0 74 74"><rect width="74" height="74" fill="#000"/><circle cx="37" cy="37" r="37" fill="#eef3f4"/><circle cx="37" cy="37" r="34.500" fill="#e1e9ea"/><path d="M17 17L23 18L18 23ZM57 17L51 18L56 23ZM17 57L23 56L18 51ZM57 57L51 56L56 51Z" fill="#fff"/></svg>
<div class="a lab" style="left:2131.5px;top:1283.5px;width:71px;height:16px;"><span style="left:-3.0px;letter-spacing:0.111px">stick_circle_pad</span></div>
<svg class="a" style="left:2215px;top:1209px" width="74" height="74" viewBox="0 0 74 74"><rect width="74" height="74" fill="#000"/><polygon points="72.2,48.4 58.7,66.9 37.0,74.0 15.3,66.9 1.8,48.4 1.8,25.6 15.3,7.1 37.0,0.0 58.7,7.1 72.2,25.6" fill="#282836"/><polygon points="69.3,47.5 57.0,64.5 37.0,71.0 17.0,64.5 4.7,47.5 4.7,26.5 17.0,9.5 37.0,3.0 57.0,9.5 69.3,26.5" fill="#202026"/></svg>
<div class="a lab" style="left:2216.5px;top:1283.5px;width:71px;height:16px;"><span style="left:0.5px;letter-spacing:-0.214px">ick_polygon_pa</span></div>
<svg class="a" style="left:2299px;top:1209px" width="74" height="74" viewBox="0 0 74 74"><rect width="74" height="74" fill="#303030"/><rect x="0" y="18.500" width="74" height="37" fill="#000"/></svg>
<div class="a lab" style="left:2300.5px;top:1283.5px;width:71px;height:16px;"><span style="left:-2.5px;letter-spacing:0.035px">ton_hexagon_wi</span></div>
<svg class="a" style="left:2384px;top:1209px" width="74" height="74" viewBox="0 0 74 74"><rect width="74" height="74" fill="#000"/><defs><linearGradient id="sq2" x1="0" y1="0" x2="0" y2="1"><stop offset="0" stop-color="#252532"/><stop offset="1" stop-color="#2f2f3e"/></linearGradient></defs><rect x="0" y="0" width="74" height="74" rx="2.500" fill="#2e2e3d"/><rect x="3" y="3.500" width="68" height="67.500" fill="url(#sq2)"/></svg>
<div class="a lab" style="left:2385.5px;top:1283.5px;width:71px;height:16px;"><span style="left:0.5px;letter-spacing:-0.140px">tick_square_nub</span></div>
<svg class="a" style="left:2469px;top:1209px" width="74" height="74" viewBox="0 0 74 74"><rect width="74" height="74" fill="#303030"/><rect x="5" y="5" width="64" height="64" fill="#000"/><circle cx="37" cy="37" r="32" fill="#2d2d3b"/></svg>
<div class="a lab" style="left:2470.5px;top:1283.5px;width:71px;height:16px;"><span style="left:-3.0px;letter-spacing:0.111px">stick_circle_nub</span></div>
<div class="t" style="left:1944px;top:1300px;height:18px;line-height:18px;color:#e6e6e6;font-weight:bold;width:616px;text-align:center;text-shadow:0 1px 1px #000;">Previewing 28 of 948 Objects</div>
<div class="a" style="left:1944px;top:1320px;width:616px;height:50px;background:#383838;border-top:1px solid #232323;"></div>
<svg class="a" style="left:2536px;top:1326px;" width="20" height="15" viewBox="0 0 20 15"><rect x="0" y="0" width="20" height="15" rx="8.500" ry="7.500" fill="#214d8e"/><path d="M5.500 4H10L14.500 8.500L11 12L6.500 7.500Z" fill="#e8e8e8"/><circle cx="8.300" cy="6" r="0.900" fill="#2a4f8f"/></svg>
<div class="t" style="left:1948px;top:1349px;height:19px;line-height:19px;color:#c4c4c4;letter-spacing:-0.064px;">AssetBundle</div>
<div class="a" style="left:2039px;top:1348px;width:396px;height:18px;background:#515151;border:1px solid #303030;border-bottom-color:#242424;border-radius:3px;"></div>
<div class="t" style="left:2043px;top:1349px;height:16px;line-height:16px;color:#e4e4e4;letter-spacing:-0.098px;">None</div>
<svg class="a" style="left:2421px;top:1355px;" width="7" height="4" viewBox="0 0 7 4"><path d="M0 0H7L3.5 4Z" fill="#d0d0d0"/></svg>
<div class="a" style="left:2440px;top:1348px;width:117px;height:18px;background:#515151;border:1px solid #303030;border-bottom-color:#242424;border-radius:3px;"></div>
<div class="t" style="left:2444px;top:1349px;height:16px;line-height:16px;color:#e4e4e4;letter-spacing:-0.098px;">None</div>
<svg class="a" style="left:2543px;top:1355px;" width="7" height="4" viewBox="0 0 7 4"><path d="M0 0H7L3.5 4Z" fill="#d0d0d0"/></svg>
<div class="a" style="left:0px;top:875px;width:1942px;height:19px;background:#282828;"></div>
<div class="a" style="left:0px;top:875px;width:80px;height:19px;background:#383838;border-top:2px solid #3a79bb;border-radius:2px 2px 0 0;"></div>
<svg class="a" style="left:6.5px;top:879.5px;" width="12.6" height="10.4" viewBox="0 0 13 11"><path d="M0.5 1.2C0.5 0.8 0.8 0.5 1.2 0.5H4.8L6 2H11.8C12.2 2 12.5 2.3 12.5 2.7V9.8C12.5 10.2 12.2 10.5 11.8 10.5H1.2C0.8 10.5 0.5 10.2 0.5 9.8Z" fill="#c4c4c4"/></svg>
<div class="t" style="left:23px;top:876px;height:20px;line-height:20px;color:#c4c4c4;letter-spacing:0.156px;">Project</div>
<svg class="a" style="left:90px;top:879px;" width="12" height="11" viewBox="0 0 12 11"><path d="M1 1L5 5.500L1 10M5 5.500H11M8.500 3L11 5.500L8.500 8" fill="none" stroke="#c4c4c4" stroke-width="1.400"/></svg>
<div class="t" style="left:105px;top:876px;height:20px;line-height:20px;color:#c4c4c4;letter-spacing:-0.002px;">Animator</div>
<svg class="a" style="left:181px;top:879px;" width="12" height="12" viewBox="0 0 12 12"><circle cx="6" cy="6" r="6" fill="#c4c4c4"/><path d="M6 1.800V6H10" fill="none" stroke="#282828" stroke-width="1.400"/></svg>
<div class="t" style="left:197px;top:876px;height:20px;line-height:20px;color:#c4c4c4;letter-spacing:-0.010px;">Animation</div>
<svg class="a" style="left:280px;top:879px;" width="11" height="11" viewBox="0 0 11 11"><rect x="0.500" y="0.500" width="10" height="10" fill="#c4c4c4"/><path d="M2 3H9M2 5.300H9M2 7.600H9" stroke="#282828" stroke-width="1"/></svg>
<div class="t" style="left:295px;top:876px;height:20px;line-height:20px;color:#c4c4c4;letter-spacing:0.018px;">Console</div>
<svg class="a" style="left:367px;top:879px;" width="12" height="11" viewBox="0 0 12 11"><path d="M2 0V11M6 0V11M10 0V11" stroke="#c4c4c4" stroke-width="1"/><rect x="0.500" y="6" width="3" height="2.500" fill="#c4c4c4"/><rect x="4.500" y="2" width="3" height="2.500" fill="#c4c4c4"/><rect x="8.500" y="4.500" width="3" height="2.500" fill="#c4c4c4"/></svg>
<div class="t" style="left:383px;top:876px;height:20px;line-height:20px;color:#c4c4c4;letter-spacing:0.000px;">Audio Mixer</div>
<svg class="a" style="left:1907px;top:879px;" width="9" height="10" viewBox="0 0 9 10"><path d="M6.600 4.600V2.800C6.600 1.500 5.700 0.600 4.500 0.600S2.400 1.400 2.400 2.500V3" fill="none" stroke="#c4c4c4" stroke-width="1.100"/><rect x="0.900" y="5" width="7.200" height="4.400" rx="0.600" fill="none" stroke="#c4c4c4" stroke-width="1.100"/></svg>
<svg class="a" style="left:1928px;top:879px;" width="2" height="10" viewBox="0 0 2 10"><rect x="0" y="0" width="2" height="2" fill="#c4c4c4"/><rect x="0" y="4" width="2" height="2" fill="#c4c4c4"/><rect x="0" y="8" width="2" height="2" fill="#c4c4c4"/></svg>
<div class="a" style="left:0px;top:894px;width:1942px;height:21px;background:#3c3c3c;border-bottom:1px solid #232323;"></div>
<svg class="a" style="left:7px;top:898px;" width="12" height="12" viewBox="0 0 12 12"><path d="M6 0V12M0 6H12" stroke="#c4c4c4" stroke-width="1.800"/></svg>
<svg class="a" style="left:23px;top:902px;" width="7" height="4" viewBox="0 0 7 4"><path d="M0 0H7L3.5 4Z" fill="#c4c4c4"/></svg>
<div class="a" style="left:1477px;top:896px;width:299px;height:16px;background:#2a2a2a;border:1px solid #212121;border-radius:3px 0 0 3px;"></div>
<div class="a" style="left:1776px;top:896px;width:18px;height:16px;background:#2a2a2a;border:1px solid #212121;border-left:1px solid #3a3a3a;border-radius:0 3px 3px 0;"></div>
<svg class="a" style="left:1481px;top:900px;" width="9" height="9" viewBox="0 0 9 9"><circle cx="3.300" cy="3.300" r="2.300" fill="none" stroke="#c4c4c4" stroke-width="1.300"/><path d="M5 5L8 8" stroke="#c4c4c4" stroke-width="1.500"/></svg>
<div class="t" style="left:1490px;top:896px;height:16px;line-height:16px;font-size:11.5px;color:#d2d2d2;letter-spacing:0.215px;">t:Texture</div>
<svg class="a" style="left:1763px;top:900px;" width="8" height="8" viewBox="0 0 8 8"><path d="M0.800 0.800L7.200 7.200M7.200 0.800L0.800 7.200" stroke="#9a9a9a" stroke-width="1"/></svg>
<svg class="a" style="left:1778px;top:897px;" width="14" height="14" viewBox="0 0 14 14"><rect x="3.900" y="1.400" width="8.500" height="8.500" rx="1" fill="none" stroke="#bdbdbd" stroke-width="1"/><rect x="1.300" y="7.700" width="4.500" height="4.500" fill="#2a2a2a" stroke="#bdbdbd" stroke-width="1"/><path d="M6.500 7.500L10 4M7 3.800H10.200V7" fill="none" stroke="#bdbdbd" stroke-width="1"/></svg>
<div class="a" style="left:1796px;top:895px;width:1px;height:19px;background:#2e2e2e;"></div>
<div class="a" style="left:1822px;top:895px;width:1px;height:19px;background:#2e2e2e;"></div>
<div class="a" style="left:1848px;top:895px;width:1px;height:19px;background:#2e2e2e;"></div>
<div class="a" style="left:1875px;top:895px;width:1px;height:19px;background:#2e2e2e;"></div>
<div class="a" style="left:1901px;top:895px;width:1px;height:19px;background:#2e2e2e;"></div>
<svg class="a" style="left:1803px;top:897px;" width="13" height="14" viewBox="0 0 13 14"><rect x="1" y="0.500" width="5.500" height="5" fill="#c4c4c4"/><path d="M9.500 2.500L13 9H6Z" fill="#c4c4c4"/><circle cx="3.800" cy="9.800" r="3.400" fill="#c4c4c4"/></svg>
<svg class="a" style="left:1829px;top:898px;" width="12" height="12" viewBox="0 0 12 12"><path d="M5.500 1.500H10.500V6.500L5 12L0 7Z" fill="#c4c4c4" transform="rotate(8 6 6)"/><circle cx="8.300" cy="3.800" r="1" fill="#3c3c3c"/></svg>
<svg class="a" style="left:1855px;top:897px;" width="13" height="13" viewBox="0 0 13 13"><path d="M4 0.300H9L12.700 4V9L9 12.700H4L0.300 9V4Z" fill="#c4c4c4"/><rect x="5.600" y="2.600" width="1.800" height="5.400" fill="#3c3c3c"/><rect x="5.600" y="9" width="1.800" height="1.800" fill="#3c3c3c"/></svg>
<svg class="a" style="left:1882px;top:898px;" width="12" height="12" viewBox="0 0 12 12"><path d="M6 0.300L7.700 4.200L11.800 4.500L8.700 7.300L9.700 11.500L6 9.200L2.300 11.500L3.300 7.300L0.200 4.500L4.300 4.200Z" fill="#c4c4c4"/></svg>
<svg class="a" style="left:1907px;top:900px;" width="15" height="9" viewBox="0 0 15 9"><path d="M0.500 4.500C2.500 1.500 5 0.500 7.500 0.500S12.500 1.500 14.500 4.500C12.500 7.500 10 8.500 7.500 8.500S2.500 7.500 0.500 4.500Z" fill="none" stroke="#7a7a7a" stroke-width="1"/><circle cx="7.500" cy="4.500" r="2.600" fill="#6a6a6a"/></svg>
<div class="t" style="left:1923px;top:895px;height:20px;line-height:20px;color:#b0b0b0;letter-spacing:-0.203px;">22</div>
<div class="a" style="left:0px;top:915px;width:196px;height:455px;background:#383838;"></div>
<div class="a" style="left:0px;top:1043px;width:196px;height:16px;background:#4d4d4d;"></div>
<div class="a" style="left:0;top:0;width:196px;height:1370px;overflow:hidden"><svg class="a" style="left:4px;top:920px;" width="9" height="8" viewBox="0 0 9 8"><path d="M0 0H9L4.5 8Z" fill="#6a6a6a"/></svg><svg class="a" style="left:18px;top:918px;" width="14" height="11" viewBox="0 0 14 11"><path d="M1 9.5V1.2C1 0.9 1.2 0.7 1.5 0.7H4.8L6 2.2H11C11.3 2.2 11.5 2.4 11.5 2.7V4" fill="none" stroke="#c2c2c2" stroke-width="1.2"/><path d="M3 4.3H13.3C13.6 4.3 13.8 4.6 13.7 4.9L11.9 10C11.8 10.3 11.6 10.5 11.3 10.5H1.2C0.9 10.5 0.7 10.2 0.8 9.9L2.5 4.7C2.6 4.4 2.7 4.3 3 4.3Z" fill="#c2c2c2"/></svg><div class="t" style="left:35px;top:915px;height:17px;line-height:17px;color:#c4c4c4;font-weight:bold;letter-spacing:-0.083px;">Assets</div><svg class="a" style="left:18px;top:936px;" width="9" height="8" viewBox="0 0 9 8"><path d="M0 0H9L4.5 8Z" fill="#6a6a6a"/></svg><svg class="a" style="left:32px;top:934px;" width="14" height="11" viewBox="0 0 14 11"><path d="M1 9.5V1.2C1 0.9 1.2 0.7 1.5 0.7H4.8L6 2.2H11C11.3 2.2 11.5 2.4 11.5 2.7V4" fill="none" stroke="#c2c2c2" stroke-width="1.2"/><path d="M3 4.3H13.3C13.6 4.3 13.8 4.6 13.7 4.9L11.9 10C11.8 10.3 11.6 10.5 11.3 10.5H1.2C0.9 10.5 0.7 10.2 0.8 9.9L2.5 4.7C2.6 4.4 2.7 4.3 3 4.3Z" fill="#c2c2c2"/></svg><div class="t" style="left:48px;top:931px;height:17px;line-height:17px;color:#c4c4c4;letter-spacing:-0.002px;">Plugins</div><svg class="a" style="left:33px;top:951px;" width="8" height="9" viewBox="0 0 8 9"><path d="M0 0L8 4.5L0 9Z" fill="#6a6a6a"/></svg><svg class="a" style="left:46px;top:949.5px;" width="12.6" height="10.4" viewBox="0 0 13 11"><path d="M0.5 1.2C0.5 0.8 0.8 0.5 1.2 0.5H4.8L6 2H11.8C12.2 2 12.5 2.3 12.5 2.7V9.8C12.5 10.2 12.2 10.5 11.8 10.5H1.2C0.8 10.5 0.5 10.2 0.5 9.8Z" fill="#c2c2c2"/></svg><div class="t" style="left:62px;top:947px;height:17px;line-height:17px;color:#c4c4c4;letter-spacing:-0.050px;">IngameDebugConsole</div><svg class="a" style="left:18px;top:968px;" width="9" height="8" viewBox="0 0 9 8"><path d="M0 0H9L4.5 8Z" fill="#6a6a6a"/></svg><svg class="a" style="left:32px;top:966px;" width="14" height="11" viewBox="0 0 14 11"><path d="M1 9.5V1.2C1 0.9 1.2 0.7 1.5 0.7H4.8L6 2.2H11C11.3 2.2 11.5 2.4 11.5 2.7V4" fill="none" stroke="#c2c2c2" stroke-width="1.2"/><path d="M3 4.3H13.3C13.6 4.3 13.8 4.6 13.7 4.9L11.9 10C11.8 10.3 11.6 10.5 11.3 10.5H1.2C0.9 10.5 0.7 10.2 0.8 9.9L2.5 4.7C2.6 4.4 2.7 4.3 3 4.3Z" fill="#c2c2c2"/></svg><div class="t" style="left:48px;top:963px;height:17px;line-height:17px;color:#c4c4c4;letter-spacing:-0.083px;">Resources</div><svg class="a" style="left:33px;top:983px;" width="8" height="9" viewBox="0 0 8 9"><path d="M0 0L8 4.5L0 9Z" fill="#6a6a6a"/></svg><svg class="a" style="left:46px;top:981.5px;" width="12.6" height="10.4" viewBox="0 0 13 11"><path d="M0.5 1.2C0.5 0.8 0.8 0.5 1.2 0.5H4.8L6 2H11.8C12.2 2 12.5 2.3 12.5 2.7V9.8C12.5 10.2 12.2 10.5 11.8 10.5H1.2C0.8 10.5 0.5 10.2 0.5 9.8Z" fill="#c2c2c2"/></svg><div class="t" style="left:62px;top:979px;height:17px;line-height:17px;color:#c4c4c4;letter-spacing:-0.609px;">FBX</div><svg class="a" style="left:46px;top:997.5px;" width="12.6" height="10.4" viewBox="0 0 13 11"><path d="M0.5 1.2C0.5 0.8 0.8 0.5 1.2 0.5H4.8L6 2H11.8C12.2 2 12.5 2.3 12.5 2.7V9.8C12.5 10.2 12.2 10.5 11.8 10.5H1.2C0.8 10.5 0.5 10.2 0.5 9.8Z" fill="#c2c2c2"/></svg><div class="t" style="left:62px;top:995px;height:17px;line-height:17px;color:#c4c4c4;letter-spacing:-0.018px;">SimpleURPToon</div><svg class="a" style="left:32px;top:1016px;" width="9" height="8" viewBox="0 0 9 8"><path d="M0 0H9L4.5 8Z" fill="#6a6a6a"/></svg><svg class="a" style="left:46px;top:1014px;" width="14" height="11" viewBox="0 0 14 11"><path d="M1 9.5V1.2C1 0.9 1.2 0.7 1.5 0.7H4.8L6 2.2H11C11.3 2.2 11.5 2.4 11.5 2.7V4" fill="none" stroke="#c2c2c2" stroke-width="1.2"/><path d="M3 4.3H13.3C13.6 4.3 13.8 4.6 13.7 4.9L11.9 10C11.8 10.3 11.6 10.5 11.3 10.5H1.2C0.9 10.5 0.7 10.2 0.8 9.9L2.5 4.7C2.6 4.4 2.7 4.3 3 4.3Z" fill="#c2c2c2"/></svg><div class="t" style="left:62px;top:1011px;height:17px;line-height:17px;color:#c4c4c4;letter-spacing:-0.250px;">UI</div><svg class="a" style="left:46px;top:1032px;" width="9" height="8" viewBox="0 0 9 8"><path d="M0 0H9L4.5 8Z" fill="#6a6a6a"/></svg><svg class="a" style="left:60px;top:1030px;" width="14" height="11" viewBox="0 0 14 11"><path d="M1 9.5V1.2C1 0.9 1.2 0.7 1.5 0.7H4.8L6 2.2H11C11.3 2.2 11.5 2.4 11.5 2.7V4" fill="none" stroke="#c2c2c2" stroke-width="1.2"/><path d="M3 4.3H13.3C13.6 4.3 13.8 4.6 13.7 4.9L11.9 10C11.8 10.3 11.6 10.5 11.3 10.5H1.2C0.9 10.5 0.7 10.2 0.8 9.9L2.5 4.7C2.6 4.4 2.7 4.3 3 4.3Z" fill="#c2c2c2"/></svg><div class="t" style="left:76px;top:1027px;height:17px;line-height:17px;color:#c4c4c4;letter-spacing:0.217px;">Texture</div><svg class="a" style="left:60px;top:1048px;" width="9" height="8" viewBox="0 0 9 8"><path d="M0 0H9L4.5 8Z" fill="#6a6a6a"/></svg><svg class="a" style="left:74px;top:1046px;" width="14" height="11" viewBox="0 0 14 11"><path d="M1 9.5V1.2C1 0.9 1.2 0.7 1.5 0.7H4.8L6 2.2H11C11.3 2.2 11.5 2.4 11.5 2.7V4" fill="none" stroke="#c2c2c2" stroke-width="1.2"/><path d="M3 4.3H13.3C13.6 4.3 13.8 4.6 13.7 4.9L11.9 10C11.8 10.3 11.6 10.5 11.3 10.5H1.2C0.9 10.5 0.7 10.2 0.8 9.9L2.5 4.7C2.6 4.4 2.7 4.3 3 4.3Z" fill="#c2c2c2"/></svg><div class="t" style="left:90px;top:1043px;height:17px;line-height:17px;color:#c4c4c4;letter-spacing:0.214px;">mobile-controls-1</div><svg class="a" style="left:74px;top:1064px;" width="9" height="8" viewBox="0 0 9 8"><path d="M0 0H9L4.5 8Z" fill="#6a6a6a"/></svg><svg class="a" style="left:88px;top:1062px;" width="14" height="11" viewBox="0 0 14 11"><path d="M1 9.5V1.2C1 0.9 1.2 0.7 1.5 0.7H4.8L6 2.2H11C11.3 2.2 11.5 2.4 11.5 2.7V4" fill="none" stroke="#c2c2c2" stroke-width="1.2"/><path d="M3 4.3H13.3C13.6 4.3 13.8 4.6 13.7 4.9L11.9 10C11.8 10.3 11.6 10.5 11.3 10.5H1.2C0.9 10.5 0.7 10.2 0.8 9.9L2.5 4.7C2.6 4.4 2.7 4.3 3 4.3Z" fill="#c2c2c2"/></svg><div class="t" style="left:104px;top:1059px;height:17px;line-height:17px;color:#c4c4c4;letter-spacing:0.013px;">Sprites</div><svg class="a" style="left:89px;top:1079px;" width="8" height="9" viewBox="0 0 8 9"><path d="M0 0L8 4.5L0 9Z" fill="#6a6a6a"/></svg><svg class="a" style="left:102px;top:1077.5px;" width="12.6" height="10.4" viewBox="0 0 13 11"><path d="M0.5 1.2C0.5 0.8 0.8 0.5 1.2 0.5H4.8L6 2H11.8C12.2 2 12.5 2.3 12.5 2.7V9.8C12.5 10.2 12.2 10.5 11.8 10.5H1.2C0.8 10.5 0.5 10.2 0.5 9.8Z" fill="#c2c2c2"/></svg><div class="t" style="left:118px;top:1075px;height:17px;line-height:17px;color:#c4c4c4;letter-spacing:0.081px;">Highlights A</div><svg class="a" style="left:89px;top:1095px;" width="8" height="9" viewBox="0 0 8 9"><path d="M0 0L8 4.5L0 9Z" fill="#6a6a6a"/></svg><svg class="a" style="left:102px;top:1093.5px;" width="12.6" height="10.4" viewBox="0 0 13 11"><path d="M0.5 1.2C0.5 0.8 0.8 0.5 1.2 0.5H4.8L6 2H11.8C12.2 2 12.5 2.3 12.5 2.7V9.8C12.5 10.2 12.2 10.5 11.8 10.5H1.2C0.8 10.5 0.5 10.2 0.5 9.8Z" fill="#c2c2c2"/></svg><div class="t" style="left:118px;top:1091px;height:17px;line-height:17px;color:#c4c4c4;letter-spacing:0.023px;">Highlights B</div><svg class="a" style="left:89px;top:1111px;" width="8" height="9" viewBox="0 0 8 9"><path d="M0 0L8 4.5L0 9Z" fill="#6a6a6a"/></svg><svg class="a" style="left:102px;top:1109.5px;" width="12.6" height="10.4" viewBox="0 0 13 11"><path d="M0.5 1.2C0.5 0.8 0.8 0.5 1.2 0.5H4.8L6 2H11.8C12.2 2 12.5 2.3 12.5 2.7V9.8C12.5 10.2 12.2 10.5 11.8 10.5H1.2C0.8 10.5 0.5 10.2 0.5 9.8Z" fill="#c2c2c2"/></svg><div class="t" style="left:118px;top:1107px;height:17px;line-height:17px;color:#c4c4c4;letter-spacing:0.025px;">Icons</div><svg class="a" style="left:89px;top:1127px;" width="8" height="9" viewBox="0 0 8 9"><path d="M0 0L8 4.5L0 9Z" fill="#6a6a6a"/></svg><svg class="a" style="left:102px;top:1125.5px;" width="12.6" height="10.4" viewBox="0 0 13 11"><path d="M0.5 1.2C0.5 0.8 0.8 0.5 1.2 0.5H4.8L6 2H11.8C12.2 2 12.5 2.3 12.5 2.7V9.8C12.5 10.2 12.2 10.5 11.8 10.5H1.2C0.8 10.5 0.5 10.2 0.5 9.8Z" fill="#c2c2c2"/></svg><div class="t" style="left:118px;top:1123px;height:17px;line-height:17px;color:#c4c4c4;letter-spacing:0.154px;">Style A</div><svg class="a" style="left:88px;top:1144px;" width="9" height="8" viewBox="0 0 9 8"><path d="M0 0H9L4.5 8Z" fill="#6a6a6a"/></svg><svg class="a" style="left:102px;top:1142px;" width="14" height="11" viewBox="0 0 14 11"><path d="M1 9.5V1.2C1 0.9 1.2 0.7 1.5 0.7H4.8L6 2.2H11C11.3 2.2 11.5 2.4 11.5 2.7V4" fill="none" stroke="#c2c2c2" stroke-width="1.2"/><path d="M3 4.3H13.3C13.6 4.3 13.8 4.6 13.7 4.9L11.9 10C11.8 10.3 11.6 10.5 11.3 10.5H1.2C0.9 10.5 0.7 10.2 0.8 9.9L2.5 4.7C2.6 4.4 2.7 4.3 3 4.3Z" fill="#c2c2c2"/></svg><div class="t" style="left:118px;top:1139px;height:17px;line-height:17px;color:#c4c4c4;letter-spacing:0.056px;">Style B</div><svg class="a" style="left:116px;top:1157.5px;" width="12.6" height="10.4" viewBox="0 0 13 11"><path d="M0.5 1.2C0.5 0.8 0.8 0.5 1.2 0.5H4.8L6 2H11.8C12.2 2 12.5 2.3 12.5 2.7V9.8C12.5 10.2 12.2 10.5 11.8 10.5H1.2C0.8 10.5 0.5 10.2 0.5 9.8Z" fill="#c2c2c2"/></svg><div class="t" style="left:132px;top:1155px;height:17px;line-height:17px;color:#c4c4c4;letter-spacing:0.199px;">Default</div><svg class="a" style="left:116px;top:1173.5px;" width="12.6" height="10.4" viewBox="0 0 13 11"><path d="M0.5 1.2C0.5 0.8 0.8 0.5 1.2 0.5H4.8L6 2H11.8C12.2 2 12.5 2.3 12.5 2.7V9.8C12.5 10.2 12.2 10.5 11.8 10.5H1.2C0.8 10.5 0.5 10.2 0.5 9.8Z" fill="#c2c2c2"/></svg><div class="t" style="left:132px;top:1171px;height:17px;line-height:17px;color:#c4c4c4;letter-spacing:0.000px;">Large (2×)</div><svg class="a" style="left:89px;top:1191px;" width="8" height="9" viewBox="0 0 8 9"><path d="M0 0L8 4.5L0 9Z" fill="#6a6a6a"/></svg><svg class="a" style="left:102px;top:1189.5px;" width="12.6" height="10.4" viewBox="0 0 13 11"><path d="M0.5 1.2C0.5 0.8 0.8 0.5 1.2 0.5H4.8L6 2H11.8C12.2 2 12.5 2.3 12.5 2.7V9.8C12.5 10.2 12.2 10.5 11.8 10.5H1.2C0.8 10.5 0.5 10.2 0.5 9.8Z" fill="#c2c2c2"/></svg><div class="t" style="left:118px;top:1187px;height:17px;line-height:17px;color:#c4c4c4;letter-spacing:0.029px;">Style C</div><svg class="a" style="left:89px;top:1207px;" width="8" height="9" viewBox="0 0 8 9"><path d="M0 0L8 4.5L0 9Z" fill="#6a6a6a"/></svg><svg class="a" style="left:102px;top:1205.5px;" width="12.6" height="10.4" viewBox="0 0 13 11"><path d="M0.5 1.2C0.5 0.8 0.8 0.5 1.2 0.5H4.8L6 2H11.8C12.2 2 12.5 2.3 12.5 2.7V9.8C12.5 10.2 12.2 10.5 11.8 10.5H1.2C0.8 10.5 0.5 10.2 0.5 9.8Z" fill="#c2c2c2"/></svg><div class="t" style="left:118px;top:1203px;height:17px;line-height:17px;color:#c4c4c4;letter-spacing:0.029px;">Style D</div><svg class="a" style="left:89px;top:1223px;" width="8" height="9" viewBox="0 0 8 9"><path d="M0 0L8 4.5L0 9Z" fill="#6a6a6a"/></svg><svg class="a" style="left:102px;top:1221.5px;" width="12.6" height="10.4" viewBox="0 0 13 11"><path d="M0.5 1.2C0.5 0.8 0.8 0.5 1.2 0.5H4.8L6 2H11.8C12.2 2 12.5 2.3 12.5 2.7V9.8C12.5 10.2 12.2 10.5 11.8 10.5H1.2C0.8 10.5 0.5 10.2 0.5 9.8Z" fill="#c2c2c2"/></svg><div class="t" style="left:118px;top:1219px;height:17px;line-height:17px;color:#c4c4c4;letter-spacing:-0.087px;">Style E</div><svg class="a" style="left:89px;top:1239px;" width="8" height="9" viewBox="0 0 8 9"><path d="M0 0L8 4.5L0 9Z" fill="#6a6a6a"/></svg><svg class="a" style="left:102px;top:1237.5px;" width="12.6" height="10.4" viewBox="0 0 13 11"><path d="M0.5 1.2C0.5 0.8 0.8 0.5 1.2 0.5H4.8L6 2H11.8C12.2 2 12.5 2.3 12.5 2.7V9.8C12.5 10.2 12.2 10.5 11.8 10.5H1.2C0.8 10.5 0.5 10.2 0.5 9.8Z" fill="#c2c2c2"/></svg><div class="t" style="left:118px;top:1235px;height:17px;line-height:17px;color:#c4c4c4;letter-spacing:-0.058px;">Style F</div><svg class="a" style="left:89px;top:1255px;" width="8" height="9" viewBox="0 0 8 9"><path d="M0 0L8 4.5L0 9Z" fill="#6a6a6a"/></svg><svg class="a" style="left:102px;top:1253.5px;" width="12.6" height="10.4" viewBox="0 0 13 11"><path d="M0.5 1.2C0.5 0.8 0.8 0.5 1.2 0.5H4.8L6 2H11.8C12.2 2 12.5 2.3 12.5 2.7V9.8C12.5 10.2 12.2 10.5 11.8 10.5H1.2C0.8 10.5 0.5 10.2 0.5 9.8Z" fill="#c2c2c2"/></svg><div class="t" style="left:118px;top:1251px;height:17px;line-height:17px;color:#c4c4c4;letter-spacing:-0.069px;">Style G</div><svg class="a" style="left:89px;top:1271px;" width="8" height="9" viewBox="0 0 8 9"><path d="M0 0L8 4.5L0 9Z" fill="#6a6a6a"/></svg><svg class="a" style="left:102px;top:1269.5px;" width="12.6" height="10.4" viewBox="0 0 13 11"><path d="M0.5 1.2C0.5 0.8 0.8 0.5 1.2 0.5H4.8L6 2H11.8C12.2 2 12.5 2.3 12.5 2.7V9.8C12.5 10.2 12.2 10.5 11.8 10.5H1.2C0.8 10.5 0.5 10.2 0.5 9.8Z" fill="#c2c2c2"/></svg><div class="t" style="left:118px;top:1267px;height:17px;line-height:17px;color:#c4c4c4;letter-spacing:0.029px;">Style H</div><svg class="a" style="left:88px;top:1285.5px;" width="12.6" height="10.4" viewBox="0 0 13 11"><path d="M0.5 1.2C0.5 0.8 0.8 0.5 1.2 0.5H4.8L6 2H11.8C12.2 2 12.5 2.3 12.5 2.7V9.8C12.5 10.2 12.2 10.5 11.8 10.5H1.2C0.8 10.5 0.5 10.2 0.5 9.8Z" fill="#c2c2c2"/></svg><div class="t" style="left:104px;top:1283px;height:17px;line-height:17px;color:#c4c4c4;letter-spacing:0.043px;">Spritesheets</div><svg class="a" style="left:75px;top:1303px;" width="8" height="9" viewBox="0 0 8 9"><path d="M0 0L8 4.5L0 9Z" fill="#6a6a6a"/></svg><svg class="a" style="left:88px;top:1301.5px;" width="12.6" height="10.4" viewBox="0 0 13 11"><path d="M0.5 1.2C0.5 0.8 0.8 0.5 1.2 0.5H4.8L6 2H11.8C12.2 2 12.5 2.3 12.5 2.7V9.8C12.5 10.2 12.2 10.5 11.8 10.5H1.2C0.8 10.5 0.5 10.2 0.5 9.8Z" fill="#c2c2c2"/></svg><div class="t" style="left:104px;top:1299px;height:17px;line-height:17px;color:#c4c4c4;letter-spacing:0.260px;">Vector</div><svg class="a" style="left:19px;top:1319px;" width="8" height="9" viewBox="0 0 8 9"><path d="M0 0L8 4.5L0 9Z" fill="#6a6a6a"/></svg><svg class="a" style="left:32px;top:1317.5px;" width="12.6" height="10.4" viewBox="0 0 13 11"><path d="M0.5 1.2C0.5 0.8 0.8 0.5 1.2 0.5H4.8L6 2H11.8C12.2 2 12.5 2.3 12.5 2.7V9.8C12.5 10.2 12.2 10.5 11.8 10.5H1.2C0.8 10.5 0.5 10.2 0.5 9.8Z" fill="#c2c2c2"/></svg><div class="t" style="left:48px;top:1315px;height:17px;line-height:17px;color:#c4c4c4;letter-spacing:-0.092px;">Samples</div><svg class="a" style="left:32px;top:1333.5px;" width="12.6" height="10.4" viewBox="0 0 13 11"><path d="M0.5 1.2C0.5 0.8 0.8 0.5 1.2 0.5H4.8L6 2H11.8C12.2 2 12.5 2.3 12.5 2.7V9.8C12.5 10.2 12.2 10.5 11.8 10.5H1.2C0.8 10.5 0.5 10.2 0.5 9.8Z" fill="#c2c2c2"/></svg><div class="t" style="left:48px;top:1331px;height:17px;line-height:17px;color:#c4c4c4;letter-spacing:0.049px;">Scenes</div><svg class="a" style="left:18px;top:1352px;" width="9" height="8" viewBox="0 0 9 8"><path d="M0 0H9L4.5 8Z" fill="#6a6a6a"/></svg><svg class="a" style="left:32px;top:1350px;" width="14" height="11" viewBox="0 0 14 11"><path d="M1 9.5V1.2C1 0.9 1.2 0.7 1.5 0.7H4.8L6 2.2H11C11.3 2.2 11.5 2.4 11.5 2.7V4" fill="none" stroke="#c2c2c2" stroke-width="1.2"/><path d="M3 4.3H13.3C13.6 4.3 13.8 4.6 13.7 4.9L11.9 10C11.8 10.3 11.6 10.5 11.3 10.5H1.2C0.9 10.5 0.7 10.2 0.8 9.9L2.5 4.7C2.6 4.4 2.7 4.3 3 4.3Z" fill="#c2c2c2"/></svg><div class="t" style="left:48px;top:1347px;height:17px;line-height:17px;color:#c4c4c4;letter-spacing:0.114px;">Scripts</div><svg class="a" style="left:46px;top:1365.5px;" width="12.6" height="10.4" viewBox="0 0 13 11"><path d="M0.5 1.2C0.5 0.8 0.8 0.5 1.2 0.5H4.8L6 2H11.8C12.2 2 12.5 2.3 12.5 2.7V9.8C12.5 10.2 12.2 10.5 11.8 10.5H1.2C0.8 10.5 0.5 10.2 0.5 9.8Z" fill="#c2c2c2"/></svg><div class="t" style="left:62px;top:1363px;height:17px;line-height:17px;color:#c4c4c4;letter-spacing:-0.111px;">StudyCase1</div></div>
<div class="a" style="left:196px;top:915px;width:11px;height:455px;background:#343434;"></div>
<svg class="a" style="left:198px;top:920px;" width="7" height="4" viewBox="0 0 7 4"><path d="M0 4H7L3.500 0Z" fill="#c4c4c4"/></svg>
<svg class="a" style="left:198px;top:1359px;" width="7" height="4" viewBox="0 0 7 4"><path d="M0 0H7L3.500 4Z" fill="#c4c4c4"/></svg>
<div class="a" style="left:197px;top:963px;width:9px;height:200px;background:#5f5f5f;border-radius:5px;"></div>
<div class="a" style="left:207px;top:915px;width:1px;height:455px;background:#232323;"></div>
<div class="a" style="left:208px;top:915px;width:1734px;height:21px;background:#3c3c3c;"></div>
<div class="t" style="left:213px;top:916px;height:20px;line-height:20px;color:#c4c4c4;font-weight:bold;letter-spacing:-0.194px;">Search:</div>
<div class="t" style="left:271px;top:916px;height:20px;line-height:20px;color:#c4c4c4;letter-spacing:0.031px;">All</div>
<div class="t" style="left:307px;top:916px;height:20px;line-height:20px;color:#c4c4c4;letter-spacing:0.018px;">In Packages</div>
<div class="t" style="left:398px;top:916px;height:20px;line-height:20px;color:#c4c4c4;letter-spacing:-0.080px;">In Assets</div>
<div class="a" style="left:464px;top:916px;width:118px;height:18px;background:#585858;border-radius:9px;"></div>
<div class="t" style="left:470px;top:916px;height:20px;line-height:20px;color:#c4c4c4;letter-spacing:0.282px;">'mobile-controls-1'</div>
<div class="a" style="left:208px;top:936px;width:1721px;height:413px;background:#3e5f96;"></div>
<div class="a" style="left:0;top:936px;width:1929px;height:413px;overflow:hidden"><div class="a" style="left:0;top:-936px"><svg class="a" style="left:224px;top:940px;" width="16" height="8" viewBox="0 0 16 8"><rect x="0.800" y="0.800" width="14.400" height="6.400" rx="3.200" fill="#000" stroke="#fff" stroke-width="1.600"/></svg><div class="t" style="left:242px;top:937px;height:17px;line-height:17px;color:#f2f2f2;letter-spacing:-0.092px;">button_bean</div><svg class="a" style="left:224px;top:956px;" width="16" height="8" viewBox="0 0 16 8"><rect x="0" y="0" width="16" height="8" rx="3.600" fill="#e6ecee"/></svg><div class="t" style="left:242px;top:953px;height:17px;line-height:17px;color:#f2f2f2;letter-spacing:-0.092px;">button_bean</div><svg class="a" style="left:224px;top:972px;" width="16" height="8" viewBox="0 0 16 8"><rect x="0" y="0" width="16" height="8" fill="#242430"/></svg><div class="t" style="left:242px;top:969px;height:17px;line-height:17px;color:#f2f2f2;letter-spacing:-0.092px;">button_bean</div><svg class="a" style="left:224px;top:988px;" width="16" height="8" viewBox="0 0 16 8"><rect x="0" y="0" width="16" height="8" rx="3.600" fill="#e6ecee"/></svg><div class="t" style="left:242px;top:985px;height:17px;line-height:17px;color:#f2f2f2;letter-spacing:-0.092px;">button_bean</div><svg class="a" style="left:224px;top:1004px;" width="16" height="8" viewBox="0 0 16 8"><rect x="0" y="0" width="16" height="8" fill="#242430"/></svg><div class="t" style="left:242px;top:1001px;height:17px;line-height:17px;color:#f2f2f2;letter-spacing:-0.092px;">button_bean</div><svg class="a" style="left:224px;top:1020px;" width="16" height="8" viewBox="0 0 16 8"><rect x="0" y="0" width="16" height="8" rx="3.600" fill="#85859b"/></svg><div class="t" style="left:242px;top:1017px;height:17px;line-height:17px;color:#f2f2f2;letter-spacing:-0.092px;">button_bean</div><svg class="a" style="left:224px;top:1036px;" width="16" height="8" viewBox="0 0 16 8"><rect x="0" y="0" width="16" height="8" fill="#000008"/></svg><div class="t" style="left:242px;top:1033px;height:17px;line-height:17px;color:#f2f2f2;letter-spacing:-0.092px;">button_bean</div><svg class="a" style="left:224px;top:1052px;" width="16" height="8" viewBox="0 0 16 8"><rect x="0" y="0" width="16" height="8" rx="3.600" fill="#e6ecee"/></svg><div class="t" style="left:242px;top:1049px;height:17px;line-height:17px;color:#f2f2f2;letter-spacing:-0.092px;">button_bean</div><svg class="a" style="left:224px;top:1068px;" width="16" height="8" viewBox="0 0 16 8"><rect x="0" y="0" width="16" height="8" rx="3.600" fill="#85859b"/></svg><div class="t" style="left:242px;top:1065px;height:17px;line-height:17px;color:#f2f2f2;letter-spacing:-0.092px;">button_bean</div><svg class="a" style="left:224px;top:1084px;" width="16" height="8" viewBox="0 0 16 8"><rect x="0" y="0" width="16" height="8" fill="#000008"/></svg><div class="t" style="left:242px;top:1081px;height:17px;line-height:17px;color:#f2f2f2;letter-spacing:-0.092px;">button_bean</div><svg class="a" style="left:224px;top:1100px;" width="16" height="8" viewBox="0 0 16 8"><rect x="0" y="0" width="16" height="8" fill="#000008"/></svg><div class="t" style="left:242px;top:1097px;height:17px;line-height:17px;color:#f2f2f2;letter-spacing:-0.092px;">button_bean</div><svg class="a" style="left:224px;top:1116px;" width="16" height="8" viewBox="0 0 16 8"><rect x="0.800" y="0.800" width="14.400" height="6.400" rx="3.200" fill="#000" stroke="#fff" stroke-width="1.600"/></svg><div class="t" style="left:242px;top:1113px;height:17px;line-height:17px;color:#f2f2f2;letter-spacing:-0.092px;">button_bean</div><svg class="a" style="left:224px;top:1132px;" width="16" height="8" viewBox="0 0 16 8"><rect x="0" y="0" width="16" height="8" rx="3.600" fill="#e6ecee"/></svg><div class="t" style="left:242px;top:1129px;height:17px;line-height:17px;color:#f2f2f2;letter-spacing:-0.092px;">button_bean</div><svg class="a" style="left:224px;top:1148px;" width="16" height="8" viewBox="0 0 16 8"><rect x="0" y="0" width="16" height="8" fill="#000008"/></svg><div class="t" style="left:242px;top:1145px;height:17px;line-height:17px;color:#f2f2f2;letter-spacing:-0.092px;">button_bean</div><svg class="a" style="left:224px;top:1164px;" width="16" height="8" viewBox="0 0 16 8"><rect x="0" y="0" width="16" height="8" fill="#242430"/></svg><div class="t" style="left:242px;top:1161px;height:17px;line-height:17px;color:#f2f2f2;letter-spacing:-0.092px;">button_bean</div><svg class="a" style="left:224px;top:1180px;" width="16" height="8" viewBox="0 0 16 8"><rect x="0" y="0" width="16" height="8" fill="#242430"/></svg><div class="t" style="left:242px;top:1177px;height:17px;line-height:17px;color:#f2f2f2;letter-spacing:-0.092px;">button_bean</div><svg class="a" style="left:224px;top:1196px;" width="16" height="8" viewBox="0 0 16 8"><rect x="0.900" y="0.900" width="14.200" height="6.200" rx="3.100" fill="#000" stroke="#ffb21e" stroke-width="1.800"/></svg><div class="t" style="left:242px;top:1193px;height:17px;line-height:17px;color:#f2f2f2;letter-spacing:-0.050px;">button_bean_highlight</div><svg class="a" style="left:224px;top:1212px;" width="16" height="8" viewBox="0 0 16 8"><rect x="0.900" y="0.900" width="14.200" height="6.200" rx="3.100" fill="#000" stroke="#9a6cf5" stroke-width="1.800"/></svg><div class="t" style="left:242px;top:1209px;height:17px;line-height:17px;color:#f2f2f2;letter-spacing:-0.050px;">button_bean_highlight</div><svg class="a" style="left:224px;top:1228px;" width="16" height="8" viewBox="0 0 16 8"><rect x="0.900" y="0.900" width="14.200" height="6.200" rx="3.100" fill="#000" stroke="#9a6cf5" stroke-width="1.800"/></svg><div class="t" style="left:242px;top:1225px;height:17px;line-height:17px;color:#f2f2f2;letter-spacing:-0.050px;">button_bean_highlight</div><svg class="a" style="left:224px;top:1244px;" width="16" height="8" viewBox="0 0 16 8"><rect x="0.900" y="0.900" width="14.200" height="6.200" rx="3.100" fill="#000" stroke="#ffb21e" stroke-width="1.800"/></svg><div class="t" style="left:242px;top:1241px;height:17px;line-height:17px;color:#f2f2f2;letter-spacing:-0.050px;">button_bean_highlight</div><svg class="a" style="left:224px;top:1256px;" width="16" height="16" viewBox="0 0 16 16"><rect width="16" height="16" fill="#000008"/></svg><div class="t" style="left:242px;top:1257px;height:17px;line-height:17px;color:#f2f2f2;letter-spacing:0.048px;">button_circle</div><svg class="a" style="left:224px;top:1272px;" width="16" height="16" viewBox="0 0 16 16"><rect width="16" height="16" fill="#000008"/><circle cx="8" cy="8" r="7.300" fill="#25252f"/></svg><div class="t" style="left:242px;top:1273px;height:17px;line-height:17px;color:#f2f2f2;letter-spacing:0.048px;">button_circle</div><svg class="a" style="left:224px;top:1288px;" width="16" height="16" viewBox="0 0 16 16"><rect width="16" height="16" fill="#000008"/><circle cx="8" cy="8" r="6.800" fill="#000" stroke="#fff" stroke-width="1.700"/></svg><div class="t" style="left:242px;top:1289px;height:17px;line-height:17px;color:#f2f2f2;letter-spacing:0.048px;">button_circle</div><svg class="a" style="left:224px;top:1304px;" width="16" height="16" viewBox="0 0 16 16"><rect width="16" height="16" fill="#000008"/><circle cx="8" cy="8" r="7.300" fill="#25252f"/></svg><div class="t" style="left:242px;top:1305px;height:17px;line-height:17px;color:#f2f2f2;letter-spacing:0.048px;">button_circle</div><svg class="a" style="left:224px;top:1320px;" width="16" height="16" viewBox="0 0 16 16"><circle cx="8" cy="8" r="8" fill="#e2e6e8"/></svg><div class="t" style="left:242px;top:1321px;height:17px;line-height:17px;color:#f2f2f2;letter-spacing:0.048px;">button_circle</div><svg class="a" style="left:224px;top:1336px;" width="16" height="16" viewBox="0 0 16 16"><rect width="16" height="16" fill="#000008"/></svg><div class="t" style="left:242px;top:1337px;height:17px;line-height:17px;color:#f2f2f2;letter-spacing:0.048px;">button_circle</div></div></div>
<div class="a" style="left:1929px;top:936px;width:13px;height:413px;background:#2d2d2d;"></div>
<svg class="a" style="left:1932px;top:943px;" width="7" height="4" viewBox="0 0 7 4"><path d="M0 4H7L3.500 0Z" fill="#c4c4c4"/></svg>
<svg class="a" style="left:1932px;top:1339px;" width="7" height="4" viewBox="0 0 7 4"><path d="M0 0H7L3.500 4Z" fill="#c4c4c4"/></svg>
<div class="a" style="left:1931px;top:952px;width:9px;height:28px;background:#5f5f5f;border-radius:5px;"></div>
<div class="a" style="left:208px;top:1349px;width:1734px;height:21px;background:#404040;"></div>
<svg class="a" style="left:211px;top:1355px;" width="16" height="8" viewBox="0 0 16 8"><rect x="0.900" y="0.900" width="14.200" height="6.200" rx="3.100" fill="#000" stroke="#fff" stroke-width="1.700"/></svg>
<div class="t" style="left:228px;top:1350px;height:20px;line-height:20px;color:#c4c4c4;letter-spacing:0.117px;">Assets/Resources/UI/Texture/mobile-controls-1/Sprites/Style C/Default/button_bean.png</div>
<div class="a" style="left:1876px;top:1359px;width:50px;height:1px;background:#5e5e5e;height:1.500px;"></div>
<div class="a" style="left:1871px;top:1355px;width:10px;height:10px;background:#999;border-radius:5px;"></div>
<div class="a" style="left:454px;top:901px;width:169px;height:50px;border:5px solid #7fd6fd;border-radius:5px;"></div>
<div class="a" style="left:1443px;top:880.5px;width:282px;height:48.5px;border:5px solid #7fd6fd;border-radius:5px;"></div>
<div class="a" style="left:0px;top:1370px;width:2560px;height:22px;background:#191919;"></div>
<div class="a" style="left:2454px;top:1372px;width:1px;height:20px;background:#222;"></div>
<div class="a" style="left:2480px;top:1372px;width:1px;height:20px;background:#222;"></div>
<div class="a" style="left:2507px;top:1372px;width:1px;height:20px;background:#222;"></div>
<div class="a" style="left:2533px;top:1372px;width:1px;height:20px;background:#222;"></div>
<div class="a" style="left:2559px;top:1372px;width:1px;height:20px;background:#222;"></div>
<svg class="a" style="left:2460px;top:1374px;" width="15" height="15" viewBox="0 0 15 15"><ellipse cx="7.500" cy="8.800" rx="4.300" ry="5.400" fill="#c4c4c4"/><circle cx="7.500" cy="2.800" r="2.100" fill="#c4c4c4"/><path d="M1 5L4 7M14 5L11 7M0.500 9.500H3.500M11.500 9.500H14.500M1.500 14L4.300 11.800M13.500 14L10.700 11.800M5 0.500L6.300 2M10 0.500L8.700 2" stroke="#c4c4c4" stroke-width="1.100" fill="none"/><path d="M0.800 0.300L14.300 14.500" stroke="#191919" stroke-width="2.600"/><path d="M0.800 0.300L14.300 14.500" stroke="#c4c4c4" stroke-width="1.100"/></svg>
<svg class="a" style="left:2486px;top:1374px;" width="15" height="15" viewBox="0 0 15 15"><ellipse cx="7.500" cy="3.300" rx="5.800" ry="2.800" fill="#c4c4c4"/><path d="M1.700 5.800C1.700 9 13.300 9 13.300 5.800V8.300C13.300 11.500 1.700 11.500 1.700 8.300ZM1.700 10.400C1.700 13.600 13.300 13.600 13.300 10.400V12C13.300 15.200 1.700 15.200 1.700 12Z" fill="#c4c4c4"/><path d="M0.800 0.300L14.300 14.500" stroke="#191919" stroke-width="2.600"/><path d="M0.800 0.300L14.300 14.500" stroke="#c4c4c4" stroke-width="1.100"/></svg>
<svg class="a" style="left:2512px;top:1374px;" width="15" height="15" viewBox="0 0 15 15"><path d="M2 6.500A5.800 5.800 0 0 1 12.200 3.600M13 8.500A5.800 5.800 0 0 1 2.800 11.400" fill="none" stroke="#c4c4c4" stroke-width="1.300"/><path d="M13.600 1.200V5.200H9.600ZM1.400 13.800V9.800H5.400Z" fill="#c4c4c4"/><path d="M7.500 4.300C9.100 4.300 10.100 5.400 10.100 6.700C10.100 7.700 9.500 8.300 9 8.900V10H6V8.900C5.500 8.300 4.900 7.700 4.900 6.700C4.900 5.400 5.900 4.300 7.500 4.300Z" fill="#c4c4c4"/><rect x="6.300" y="10.600" width="2.400" height="1" fill="#c4c4c4"/><path d="M0.800 0.300L14.300 14.500" stroke="#191919" stroke-width="2.600"/><path d="M0.800 0.300L14.300 14.500" stroke="#c4c4c4" stroke-width="1.100"/></svg>
<svg class="a" style="left:2539px;top:1374px;" width="15" height="15" viewBox="0 0 15 15"><circle cx="7.300" cy="7.600" r="6.500" fill="none" stroke="#c4c4c4" stroke-width="1.100"/><path d="M4.300 7.800L6.600 10.100L10.600 5.600" fill="none" stroke="#c4c4c4" stroke-width="1.400"/></svg>
</div>
</body></html>
